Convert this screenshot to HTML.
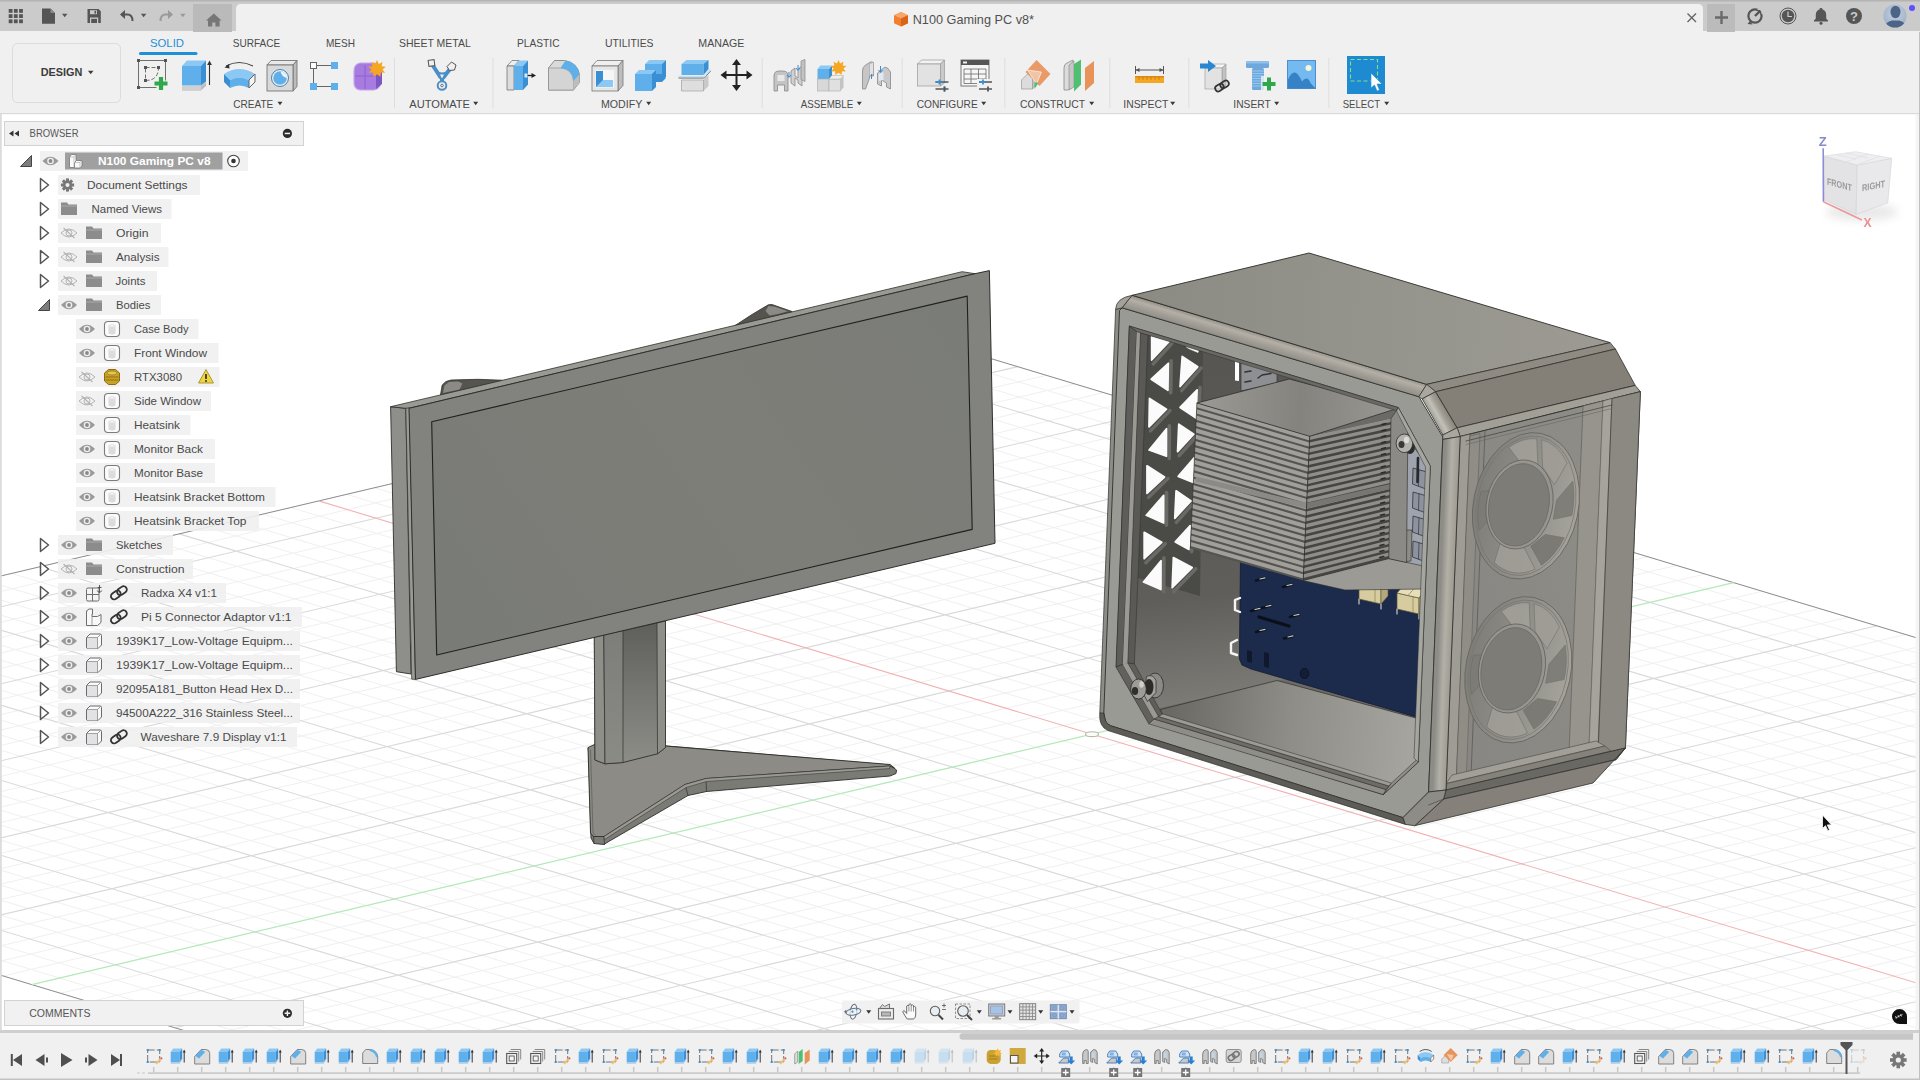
<!DOCTYPE html>
<html><head><meta charset="utf-8"><title>N100 Gaming PC v8</title>
<style>
html,body{margin:0;padding:0;background:#fff;overflow:hidden}
body{width:1920px;height:1080px;position:relative;font-family:"Liberation Sans",sans-serif}
svg{position:absolute;left:0;top:0;display:block}
text{font-family:"Liberation Sans",sans-serif}
</style></head><body>
<svg width="1920" height="1080" viewBox="0 0 1920 1080">
<rect width="1920" height="1080" fill="#ffffff"/>
<g id="grid">
<path d="M-741.5 751.3L960.4 349.4M-712.8 760L989.1 358M-655.6 777.3L1046.3 375.3M-626.9 785.9L1075 383.9M-598.3 794.5L1103.6 392.6M-569.6 803.2L1132.3 401.2M-512.4 820.5L1189.5 418.5M-483.7 829.1L1218.2 427.1M-455.1 837.7L1246.8 435.8M-426.4 846.4L1275.5 444.4M-369.2 863.7L1332.7 461.7M-340.5 872.3L1361.4 470.3M-311.9 880.9L1390 478.9M-283.2 889.6L1418.7 487.6M-226 906.9L1475.9 504.9M-197.3 915.5L1504.6 513.5M-168.7 924.1L1533.2 522.2M-140 932.8L1561.9 530.8M-82.8 950.1L1619.1 548.1M-54.1 958.7L1647.8 556.7M-25.5 967.3L1676.4 565.4M3.2 976L1705.1 574M60.4 993.3L1762.3 591.3M89.1 1001.9L1791 599.9M117.7 1010.5L1819.6 608.5M146.4 1019.2L1848.3 617.2M203.6 1036.5L1905.5 634.5M232.3 1045.1L1934.2 643.1M260.9 1053.7L1962.8 651.8M289.6 1062.4L1991.5 660.4M346.8 1079.7L2048.7 677.7M375.5 1088.3L2077.4 686.3M404.1 1096.9L2106 695M432.8 1105.6L2134.7 703.6M490 1122.9L2191.9 720.9M518.7 1131.5L2220.6 729.5M547.3 1140.1L2249.2 738.2M576 1148.8L2277.9 746.8M633.2 1166.1L2335.1 764.1M661.9 1174.7L2363.8 772.7M690.5 1183.3L2392.4 781.4M719.2 1192L2421.1 790M776.4 1209.3L2478.3 807.3M805.1 1217.9L2507 815.9M833.7 1226.5L2535.6 824.5M862.4 1235.2L2564.3 833.2M919.6 1252.5L2621.5 850.5M948.3 1261.1L2650.2 859.1M976.9 1269.7L2678.8 867.8M1005.6 1278.4L2707.5 876.4M-741.5 751.3L1005.6 1278.4M-713.6 744.8L1033.5 1271.8M-685.7 738.2L1061.4 1265.2M-629.9 725L1117.2 1252M-602 718.4L1145.1 1245.4M-574.1 711.8L1173 1238.8M-546.2 705.2L1200.9 1232.2M-490.4 692L1256.7 1219.1M-462.5 685.4L1284.6 1212.5M-434.6 678.9L1312.5 1205.9M-406.7 672.3L1340.4 1199.3M-350.9 659.1L1396.2 1186.1M-323 652.5L1424.1 1179.5M-295.1 645.9L1452 1172.9M-267.2 639.3L1479.9 1166.4M-211.4 626.1L1535.7 1153.2M-183.5 619.5L1563.6 1146.6M-155.6 613L1591.5 1140M-127.7 606.4L1619.4 1133.4M-71.9 593.2L1675.2 1120.2M-44 586.6L1703.1 1113.6M-16.1 580L1731 1107M11.8 573.4L1758.9 1100.5M67.6 560.2L1814.7 1087.3M95.5 553.6L1842.6 1080.7M123.4 547.1L1870.5 1074.1M151.3 540.5L1898.4 1067.5M207.1 527.3L1954.2 1054.3M235 520.7L1982.1 1047.7M262.9 514.1L2010 1041.1M290.8 507.5L2037.9 1034.5M346.6 494.3L2093.7 1021.4M374.5 487.7L2121.6 1014.8M402.4 481.2L2149.5 1008.2M430.3 474.6L2177.4 1001.6M486.1 461.4L2233.2 988.4M514 454.8L2261.1 981.8M541.9 448.2L2289 975.2M569.8 441.6L2316.9 968.6M625.6 428.4L2372.7 955.5M653.5 421.8L2400.6 948.9M681.4 415.2L2428.5 942.3M709.3 408.7L2456.4 935.7M765.1 395.5L2512.2 922.5M793 388.9L2540.1 915.9M820.9 382.3L2568 909.3M848.8 375.7L2595.9 902.8M904.6 362.5L2651.7 889.6M932.5 355.9L2679.6 883M960.4 349.4L2707.5 876.4" stroke="#f0f0f1" stroke-width="1" fill="none"/>
<path d="M-684.2 768.6L1017.7 366.6M-541 811.8L1160.9 409.8M-397.8 855L1304.1 453M-254.6 898.2L1447.3 496.2M-111.4 941.4L1590.5 539.4M175 1027.8L1876.9 625.8M318.2 1071L2020.1 669M461.4 1114.2L2163.3 712.2M604.6 1157.4L2306.5 755.4M747.8 1200.6L2449.7 798.6M891 1243.8L2592.9 841.8M-657.8 731.6L1089.3 1258.6M-518.3 698.6L1228.8 1225.7M-378.8 665.7L1368.3 1192.7M-239.3 632.7L1507.8 1159.8M-99.8 599.8L1647.3 1126.8M39.7 566.8L1786.8 1093.9M179.2 533.9L1926.3 1060.9M458.2 468L2205.3 995M597.7 435L2344.8 962.1M737.2 402.1L2484.3 929.1M876.7 369.1L2623.8 896.2" stroke="#d9d9dc" stroke-width="1.1" fill="none"/>
<path d="M-741.5 751.3 L960.4 349.4 L2707.5 876.4 L1005.6 1278.4 Z" stroke="#8e8e8e" stroke-width="1" fill="none"/>
<path d="M318.7 500.9L2065.8 1028" stroke="#f2b2b2" stroke-width="1.1" fill="none"/>
<path d="M31.8 984.6L1733.7 582.6" stroke="#b2e9b7" stroke-width="1.3" fill="none"/>
<ellipse cx="1092" cy="734.2" rx="6.5" ry="2.4" fill="#fbfbf8" stroke="#b9b9aa" stroke-width="1.1"/>
</g>
<g id="models">
<defs>
<linearGradient id="gScreen" gradientUnits="userSpaceOnUse" x1="436" y1="655" x2="968" y2="296"><stop offset="0" stop-color="#797b76"/><stop offset=".55" stop-color="#7e7e78"/><stop offset="1" stop-color="#7a7c77"/></linearGradient>
<linearGradient id="gNeck" gradientUnits="userSpaceOnUse" x1="0" y1="625" x2="0" y2="760"><stop offset="0" stop-color="#5f5f5b"/><stop offset=".45" stop-color="#747470"/><stop offset="1" stop-color="#8c8c87"/></linearGradient>
<linearGradient id="gNeck2" gradientUnits="userSpaceOnUse" x1="0" y1="630" x2="0" y2="762"><stop offset="0" stop-color="#7d7d79"/><stop offset="1" stop-color="#8b8b86"/></linearGradient>
<linearGradient id="gTop" gradientUnits="userSpaceOnUse" x1="1130" y1="300" x2="1610" y2="340"><stop offset="0" stop-color="#8b8a83"/><stop offset=".5" stop-color="#94938c"/><stop offset="1" stop-color="#9c9a93"/></linearGradient>
<linearGradient id="gFillet" gradientUnits="userSpaceOnUse" x1="0" y1="0" x2="-4.5" y2="15" gradientTransform="translate(1132 295)"><stop offset="0" stop-color="#8f8b82"/><stop offset=".3" stop-color="#b4b0a7"/><stop offset=".6" stop-color="#a39f96"/><stop offset="1" stop-color="#8d8c86"/></linearGradient>
<linearGradient id="gPillar" gradientUnits="userSpaceOnUse" x1="1440" y1="600" x2="1458" y2="600.7"><stop offset="0" stop-color="#8d8c86"/><stop offset=".35" stop-color="#b3b0a8"/><stop offset=".7" stop-color="#a09d95"/><stop offset="1" stop-color="#8a877f"/></linearGradient>
<linearGradient id="gFloor" gradientUnits="userSpaceOnUse" x1="1170" y1="715" x2="1410" y2="740"><stop offset="0" stop-color="#6a6964"/><stop offset=".5" stop-color="#8e8d87"/><stop offset="1" stop-color="#a5a49e"/></linearGradient>
<linearGradient id="gWallL" gradientUnits="userSpaceOnUse" x1="1170" y1="340" x2="1215" y2="705"><stop offset="0" stop-color="#565551"/><stop offset=".7" stop-color="#5f5e5a"/><stop offset="1" stop-color="#7d7c77"/></linearGradient>
<linearGradient id="gHsTop" gradientUnits="userSpaceOnUse" x1="1200" y1="400" x2="1400" y2="415"><stop offset="0" stop-color="#9a9994"/><stop offset=".5" stop-color="#84837e"/><stop offset="1" stop-color="#999893"/></linearGradient>
<linearGradient id="gSide" gradientUnits="userSpaceOnUse" x1="1450" y1="600" x2="1635" y2="560"><stop offset="0" stop-color="#898783"/><stop offset="1" stop-color="#8f8d87"/></linearGradient>
<linearGradient id="gChf" gradientUnits="userSpaceOnUse" x1="1428" y1="415" x2="1444" y2="406"><stop offset="0" stop-color="#8f8d86"/><stop offset=".45" stop-color="#c4c1b8"/><stop offset=".7" stop-color="#a29f97"/><stop offset="1" stop-color="#8a867e"/></linearGradient>
<linearGradient id="gRing" x1="0" y1="0" x2="1" y2="0"><stop offset="0" stop-color="#7f7d77"/><stop offset=".5" stop-color="#908e88"/><stop offset="1" stop-color="#a5a39c"/></linearGradient>
<radialGradient id="gFan" cx="50%" cy="50%" r="50%"><stop offset="0" stop-color="#85837d"/><stop offset=".8" stop-color="#8e8c85"/><stop offset="1" stop-color="#a19f98"/></radialGradient>
</defs>
<path d="M588 748 L588.5 752 L591 838 L594 843.5 L604 844.5 L607 842.5 L688 795.5 L706.5 791.5 L890 776 L896 773.5 L896.5 770 L890 765 L667 746 L640 744Z" fill="#7b7b76" stroke="#2e2e2b" stroke-width="0.9" stroke-linejoin="round" />
<path d="M588 747.5 L590.5 833 L593.5 836.5 L604 836.5 L685 784.5 L706 778.5 L889.5 766 L894.5 768 L890 764.5 L667.5 746.2 L640 742 L600 742Z" fill="#8c8b85" stroke="#2e2e2b" stroke-width="0.9" stroke-linejoin="round" />
<path d="M593.5 836.5 L594 843.5" fill="none" stroke="#2e2e2b" stroke-width="0.7" stroke-linecap="round" stroke-linejoin="round" />
<path d="M604 836.5 L604.5 844.5" fill="none" stroke="#2e2e2b" stroke-width="0.7" stroke-linecap="round" stroke-linejoin="round" />
<path d="M685 784.5 L688 795.5" fill="none" stroke="#2e2e2b" stroke-width="0.7" stroke-linecap="round" stroke-linejoin="round" />
<path d="M706 778.5 L706.5 791.5" fill="none" stroke="#2e2e2b" stroke-width="0.7" stroke-linecap="round" stroke-linejoin="round" />
<path d="M590.5 750 L593 833 L595.5 835" fill="none" stroke="#55544f" stroke-width="0.6" stroke-linecap="round" stroke-linejoin="round" />
<path d="M604 836.5 L685 784.5 L706 778.5 L889.5 766 L890 768.5 L706.3 781.5 L686 787.5 L604.5 839.5Z" fill="#9b9a94" stroke="#2e2e2b" stroke-width="0.5" stroke-linejoin="round" />
<path d="M594.3 637 L665.5 621 L665.5 747.5 L657.5 753.8 L623 762.5 L605 763.8 L595 760Z" fill="url(#gNeck)" stroke="#2e2e2b" stroke-width="0.9" stroke-linejoin="round" />
<path d="M594.3 637 L603.8 635 L605 763.8 L595 760Z" fill="#8f8f8a" stroke="#2e2e2b" stroke-width="0.7" stroke-linejoin="round" />
<path d="M603.8 635 L623 630.5 L623 762.5 L605 763.8Z" fill="url(#gNeck2)" stroke="#2e2e2b" stroke-width="0.7" stroke-linejoin="round" />
<path d="M657 623 L665.5 621 L665.5 747.5 L657.5 753.8Z" fill="#8f8f8a" stroke="#2e2e2b" stroke-width="0.7" stroke-linejoin="round" />
<path d="M440.3 396 L442.2 385 L446 381.5 L451.1 380 L478 379.3 L502 380.2 L502 383Z" fill="#55544f" stroke="#2e2e2b" stroke-width="0.8" stroke-linejoin="round" />
<path d="M443 393 L444.5 385.5 L449 382 L458 381.5 L462.5 383.5 L459.5 389.5Z" fill="#8c8a84" />
<path d="M732 327.5 L752 314.5 L768.3 304.8 L772 304.5 L792 311.5 L792 314.5Z" fill="#55544f" stroke="#2e2e2b" stroke-width="0.8" stroke-linejoin="round" />
<path d="M768.5 306 L775 306.8 L788 311.3 L778 314 L769.5 315.5 L765.5 311Z" fill="#8c8a84" />
<path d="M390.6 406.7 L405.8 408.3 L411 674 L396.4 671.7Z" fill="#8e8f8a" stroke="#2e2e2b" stroke-width="0.9" stroke-linejoin="round" />
<path d="M390.6 406.7 L962.2 271.7 L975 273.7 L408 408.5 L405.8 408.3Z" fill="#9a9a95" stroke="#2e2e2b" stroke-width="0.8" stroke-linejoin="round" />
<path d="M405.8 408.3 L409.4 407.8 L415.5 679.4 L411.7 679.1Z" fill="#9b9b96" stroke="#2e2e2b" stroke-width="0.7" stroke-linejoin="round" />
<path d="M409 408.3 L975 273.7 L989.4 270.6 L995 543.3 L415.5 679.4Z" fill="#82837e" stroke="#2e2e2b" stroke-width="1" stroke-linejoin="round" />
<path d="M431.7 421.7 L967.2 296.1 L972.2 529.4 L436.7 655Z" fill="url(#gScreen)" stroke="#20201e" stroke-width="1.1" stroke-linejoin="round" />
<path d="M1129.4 326.1 L1398.3 407.6 L1430.3 466 L1418.2 762.2 L1383.3 794.6 L1150 723.3 L1116.3 666.3Z" fill="#6b6a66" />
<path d="M1141 330 L1290 374 L1290 678 L1160 708 L1150 723.3 L1116.3 666.3 L1129.4 330Z" fill="url(#gWallL)" />
<path d="M1160.3 709.5 L1277 680.5 L1419.5 719 L1418.2 762.2 L1391 784.5 L1163 715.5Z" fill="url(#gFloor)" stroke="#2e2e2b" stroke-width="0.7" stroke-linejoin="round" />
<path d="M1241 362 L1277 372.5 L1277 383 L1241 391Z" fill="#8d8f93" stroke="#2e2e2b" stroke-width="0.6" stroke-linejoin="round" />
<path d="M1245 372 L1251 371" fill="none" stroke="#333" stroke-width="1.6" stroke-linecap="round" stroke-linejoin="round" />
<path d="M1245 382 L1251 381" fill="none" stroke="#333" stroke-width="1.6" stroke-linecap="round" stroke-linejoin="round" />
<path d="M1258 378 L1262 375 L1271 373.5" fill="none" stroke="#333" stroke-width="1.4" stroke-linecap="round" stroke-linejoin="round" />
<path d="M1235 361 L1239 362 L1239 381 L1235 380.5Z" fill="#ffffff" />
<path d="M1240.7 540 L1420 560 L1419.5 718 L1251 669 L1242 665 L1239.4 659Z" fill="#1c2a4b" stroke="#141c30" stroke-width="0.8" stroke-linejoin="round" />
<path d="M1240 598 L1235 600 L1235 610 L1240 612" fill="none" stroke="#f4f4f4" stroke-width="2.4" stroke-linecap="round" stroke-linejoin="round" />
<path d="M1237 640 L1231 643 L1231 653 L1237 655" fill="none" stroke="#f4f4f4" stroke-width="2.4" stroke-linecap="round" stroke-linejoin="round" />
<path d="M1256 580.5 L1265 578" fill="none" stroke="#0d1220" stroke-width="2.6" stroke-linecap="round" stroke-linejoin="round" />
<path d="M1260 579 L1265 577.8" fill="none" stroke="#c9c6b8" stroke-width="1.2" stroke-linecap="round" stroke-linejoin="round" />
<path d="M1283 587 L1292 584.5" fill="none" stroke="#0d1220" stroke-width="2.6" stroke-linecap="round" stroke-linejoin="round" />
<path d="M1287 585.5 L1292 584.3" fill="none" stroke="#c9c6b8" stroke-width="1.2" stroke-linecap="round" stroke-linejoin="round" />
<path d="M1251 611 L1260 608.5" fill="none" stroke="#0d1220" stroke-width="2.6" stroke-linecap="round" stroke-linejoin="round" />
<path d="M1255 609.5 L1260 608.3" fill="none" stroke="#c9c6b8" stroke-width="1.2" stroke-linecap="round" stroke-linejoin="round" />
<path d="M1262 608 L1271 605.5" fill="none" stroke="#0d1220" stroke-width="2.6" stroke-linecap="round" stroke-linejoin="round" />
<path d="M1266 606.5 L1271 605.3" fill="none" stroke="#c9c6b8" stroke-width="1.2" stroke-linecap="round" stroke-linejoin="round" />
<path d="M1290 617 L1299 614.5" fill="none" stroke="#0d1220" stroke-width="2.6" stroke-linecap="round" stroke-linejoin="round" />
<path d="M1294 615.5 L1299 614.3" fill="none" stroke="#c9c6b8" stroke-width="1.2" stroke-linecap="round" stroke-linejoin="round" />
<path d="M1256 632 L1265 629.5" fill="none" stroke="#0d1220" stroke-width="2.6" stroke-linecap="round" stroke-linejoin="round" />
<path d="M1260 630.5 L1265 629.3" fill="none" stroke="#c9c6b8" stroke-width="1.2" stroke-linecap="round" stroke-linejoin="round" />
<path d="M1284 638.5 L1293 636" fill="none" stroke="#0d1220" stroke-width="2.6" stroke-linecap="round" stroke-linejoin="round" />
<path d="M1288 637 L1293 635.8" fill="none" stroke="#c9c6b8" stroke-width="1.2" stroke-linecap="round" stroke-linejoin="round" />
<path d="M1259 617 L1289 626" fill="none" stroke="#0b0f1a" stroke-width="3.2" stroke-linecap="round" stroke-linejoin="round" />
<path d="M1247 650 L1252 651.5 L1252 663 L1247 661.5Z" fill="#10182c" />
<path d="M1264 652 L1269 653.5 L1269 668 L1264 666.5Z" fill="#10182c" />
<ellipse cx="1304.5" cy="673.5" rx="4.2" ry="5" fill="#141d36" stroke="#0b0f1a" stroke-width=".8"/>
<path d="M1359 583 L1381 588 L1381 604 L1359 599Z" fill="#d6cc9f" stroke="#5f5838" stroke-width="0.7" stroke-linejoin="round" />
<path d="M1359 583 L1366 575 L1388 580 L1381 588Z" fill="#e6deb8" stroke="#5f5838" stroke-width="0.6" stroke-linejoin="round" />
<path d="M1381 588 L1388 580 L1388 596 L1381 604Z" fill="#b3a97e" stroke="#5f5838" stroke-width="0.6" stroke-linejoin="round" />
<path d="M1370 585.5 L1377 577.5" fill="none" stroke="#8a8258" stroke-width="0.7" stroke-linecap="round" stroke-linejoin="round" />
<path d="M1375 586.7 L1375 602.5" fill="none" stroke="#8a8258" stroke-width="0.7" stroke-linecap="round" stroke-linejoin="round" />
<path d="M1359 599 L1359 604" fill="none" stroke="#cfcab5" stroke-width="1.2" stroke-linecap="round" stroke-linejoin="round" />
<path d="M1381 604 L1381 609" fill="none" stroke="#cfcab5" stroke-width="1.2" stroke-linecap="round" stroke-linejoin="round" />
<path d="M1397 593 L1419 598 L1419 614 L1397 609Z" fill="#d6cc9f" stroke="#5f5838" stroke-width="0.7" stroke-linejoin="round" />
<path d="M1397 593 L1404 585 L1426 590 L1419 598Z" fill="#e6deb8" stroke="#5f5838" stroke-width="0.6" stroke-linejoin="round" />
<path d="M1419 598 L1426 590 L1426 606 L1419 614Z" fill="#b3a97e" stroke="#5f5838" stroke-width="0.6" stroke-linejoin="round" />
<path d="M1408 595.5 L1415 587.5" fill="none" stroke="#8a8258" stroke-width="0.7" stroke-linecap="round" stroke-linejoin="round" />
<path d="M1413 596.7 L1413 612.5" fill="none" stroke="#8a8258" stroke-width="0.7" stroke-linecap="round" stroke-linejoin="round" />
<path d="M1397 609 L1397 614" fill="none" stroke="#cfcab5" stroke-width="1.2" stroke-linecap="round" stroke-linejoin="round" />
<path d="M1419 614 L1419 619" fill="none" stroke="#cfcab5" stroke-width="1.2" stroke-linecap="round" stroke-linejoin="round" />
<path d="M1407 438 L1431 470 L1425.5 572 L1406 566Z" fill="#9ea3ad" stroke="#3f434b" stroke-width="0.7" stroke-linejoin="round" />
<path d="M1413 468 L1427 472 L1426 489 L1412.5 484Z" fill="#8d939e" stroke="#30343b" stroke-width="0.8" stroke-linejoin="round" />
<path d="M1419 470 L1418.5 486" fill="none" stroke="#30343b" stroke-width="0.7" stroke-linecap="round" stroke-linejoin="round" />
<path d="M1413 492 L1427 496 L1426 513 L1412.5 508Z" fill="#8d939e" stroke="#30343b" stroke-width="0.8" stroke-linejoin="round" />
<path d="M1419 494 L1418.5 510" fill="none" stroke="#30343b" stroke-width="0.7" stroke-linecap="round" stroke-linejoin="round" />
<path d="M1413 516 L1427 520 L1426 537 L1412.5 532Z" fill="#8d939e" stroke="#30343b" stroke-width="0.8" stroke-linejoin="round" />
<path d="M1419 518 L1418.5 534" fill="none" stroke="#30343b" stroke-width="0.7" stroke-linecap="round" stroke-linejoin="round" />
<path d="M1413 541 L1427 545 L1426 562 L1412.5 557Z" fill="#8d939e" stroke="#30343b" stroke-width="0.8" stroke-linejoin="round" />
<path d="M1419 543 L1418.5 559" fill="none" stroke="#30343b" stroke-width="0.7" stroke-linecap="round" stroke-linejoin="round" />
<path d="M1418 458 L1417.5 482" fill="none" stroke="#26282c" stroke-width="2.6" stroke-linecap="round" stroke-linejoin="round" />
<path d="M1398 523 L1404 521.5 L1404 530 L1412 530 L1411 561 L1397 562.5Z" fill="#8d8c87" stroke="#2e2e2b" stroke-width="0.6" stroke-linejoin="round" />
<path d="M1303 580.6 L1389 558.6 L1428 567 L1426.5 589 L1345 590Z" fill="#9b9a95" stroke="#2e2e2b" stroke-width="0.6" stroke-linejoin="round" />
<path d="M1147.5 334.5 L1203 351 L1200 596 L1138 578Z" fill="#4a4a47" />
<path d="M1172.2 343.1 L1153.3 363.9" fill="none" stroke="#6a6965" stroke-width="3.4" stroke-linecap="round" stroke-linejoin="round" />
<path d="M1170 410.6 L1150.5 430.9" fill="none" stroke="#6a6965" stroke-width="3.4" stroke-linecap="round" stroke-linejoin="round" />
<path d="M1168 478.5 L1148.6 497.4" fill="none" stroke="#6a6965" stroke-width="3.4" stroke-linecap="round" stroke-linejoin="round" />
<path d="M1165.3 543.8 L1145.8 562.7" fill="none" stroke="#6a6965" stroke-width="3.4" stroke-linecap="round" stroke-linejoin="round" />
<path d="M1201.1 368.1 L1181.6 390.7" fill="none" stroke="#6a6965" stroke-width="3.4" stroke-linecap="round" stroke-linejoin="round" />
<path d="M1197.2 435.5 L1179.2 455.7" fill="none" stroke="#6a6965" stroke-width="3.4" stroke-linecap="round" stroke-linejoin="round" />
<path d="M1194.4 502.2 L1176.4 522.4" fill="none" stroke="#6a6965" stroke-width="3.4" stroke-linecap="round" stroke-linejoin="round" />
<path d="M1195.8 568.8 L1173.6 591.8" fill="none" stroke="#6a6965" stroke-width="3.4" stroke-linecap="round" stroke-linejoin="round" />
<path d="M1171.1 360.7 L1170.7 392.7" fill="none" stroke="#6a6965" stroke-width="3.6" stroke-linecap="round" stroke-linejoin="round" />
<path d="M1169.4 425.9 L1169.2 458.5" fill="none" stroke="#6a6965" stroke-width="3.6" stroke-linecap="round" stroke-linejoin="round" />
<path d="M1166.6 492.6 L1166.4 525.2" fill="none" stroke="#6a6965" stroke-width="3.6" stroke-linecap="round" stroke-linejoin="round" />
<path d="M1163.9 557.9 L1163.7 591.8" fill="none" stroke="#6a6965" stroke-width="3.6" stroke-linecap="round" stroke-linejoin="round" />
<path d="M1200 387.3 L1198.7 420.4" fill="none" stroke="#6a6965" stroke-width="3.6" stroke-linecap="round" stroke-linejoin="round" />
<path d="M1197.2 455.1 L1196.7 484.9" fill="none" stroke="#6a6965" stroke-width="3.6" stroke-linecap="round" stroke-linejoin="round" />
<path d="M1193 523.2 L1191.6 551.6" fill="none" stroke="#6a6965" stroke-width="3.6" stroke-linecap="round" stroke-linejoin="round" />
<path d="M1151.7 337 L1168.7 342 L1151.7 360Z" fill="#fbfbfb" stroke="#fbfbfb" stroke-width="1.8" stroke-linejoin="round" />
<path d="M1149.5 398.4 L1166.5 409.2 L1149 426.8Z" fill="#fbfbfb" stroke="#fbfbfb" stroke-width="1.8" stroke-linejoin="round" />
<path d="M1147 465.8 L1164.5 477.1 L1147 493.4Z" fill="#fbfbfb" stroke="#fbfbfb" stroke-width="1.8" stroke-linejoin="round" />
<path d="M1144.2 532.4 L1161.8 542.4 L1144.2 558.7Z" fill="#fbfbfb" stroke="#fbfbfb" stroke-width="1.8" stroke-linejoin="round" />
<path d="M1182.2 356.5 L1197.7 366.8 L1180.1 386.5Z" fill="#fbfbfb" stroke="#fbfbfb" stroke-width="1.8" stroke-linejoin="round" />
<path d="M1178.8 424.2 L1193.8 434.2 L1177.6 451.6Z" fill="#fbfbfb" stroke="#fbfbfb" stroke-width="1.8" stroke-linejoin="round" />
<path d="M1176.1 490.8 L1191 500.9 L1174.8 518.3Z" fill="#fbfbfb" stroke="#fbfbfb" stroke-width="1.8" stroke-linejoin="round" />
<path d="M1173.4 557.6 L1192.2 567.6 L1172.2 587.5Z" fill="#fbfbfb" stroke="#fbfbfb" stroke-width="1.8" stroke-linejoin="round" />
<path d="M1168.3 363.3 L1167.9 390.3 L1151.2 379.2Z" fill="#fbfbfb" stroke="#fbfbfb" stroke-width="1.8" stroke-linejoin="round" />
<path d="M1166.5 428.7 L1166.4 456.2 L1149.1 450Z" fill="#fbfbfb" stroke="#fbfbfb" stroke-width="1.8" stroke-linejoin="round" />
<path d="M1163.7 495.4 L1163.6 522.9 L1146.3 515.3Z" fill="#fbfbfb" stroke="#fbfbfb" stroke-width="1.8" stroke-linejoin="round" />
<path d="M1161 560.8 L1160.9 589.5 L1143.5 582Z" fill="#fbfbfb" stroke="#fbfbfb" stroke-width="1.8" stroke-linejoin="round" />
<path d="M1197.1 390 L1196 418 L1180.1 407.5Z" fill="#fbfbfb" stroke="#fbfbfb" stroke-width="1.8" stroke-linejoin="round" />
<path d="M1194.4 457.7 L1193.9 482.7 L1178.2 476.4Z" fill="#fbfbfb" stroke="#fbfbfb" stroke-width="1.8" stroke-linejoin="round" />
<path d="M1190.2 525.7 L1188.9 549.4 L1175.3 541.9Z" fill="#fbfbfb" stroke="#fbfbfb" stroke-width="1.8" stroke-linejoin="round" />
<path d="M1186 346.6 L1198.5 350.4 L1198 352.5 L1188.5 348.5Z" fill="#fbfbfb" stroke="#fbfbfb" stroke-width="0.6" stroke-linejoin="round" />
<path d="M1196.9 403 L1309.7 436.3 L1303.2 580.6 L1190.4 548.2Z" fill="#55544f" />
<path d="M1196.9 403 L1309.7 436.3 L1309.5 440.4 L1196.7 407.2Z" fill="#a09f9b" />
<path d="M1196.6 409.3 L1309.4 442.6 L1309.2 446.7 L1196.4 413.5Z" fill="#a09f9b" />
<path d="M1196.3 415.6 L1309.1 448.8 L1308.9 453 L1196.1 419.8Z" fill="#a09f9b" />
<path d="M1196.1 421.9 L1308.9 455.1 L1308.7 459.3 L1195.9 426.1Z" fill="#a09f9b" />
<path d="M1195.8 428.3 L1308.6 461.4 L1308.4 465.5 L1195.6 432.4Z" fill="#a09f9b" />
<path d="M1195.5 434.6 L1308.3 467.7 L1308.1 471.8 L1195.3 438.7Z" fill="#a09f9b" />
<path d="M1195.2 440.9 L1308 473.9 L1307.8 478.1 L1195 445Z" fill="#a09f9b" />
<path d="M1194.9 447.2 L1307.7 480.2 L1307.5 484.4 L1194.7 451.4Z" fill="#a09f9b" />
<path d="M1194.6 453.5 L1307.4 486.5 L1307.3 490.6 L1194.5 457.7Z" fill="#a09f9b" />
<path d="M1194.4 459.8 L1307.2 492.8 L1307 496.9 L1194.2 464Z" fill="#a09f9b" />
<path d="M1194.1 466.1 L1306.9 499 L1306.7 503.2 L1193.9 470.3Z" fill="#a09f9b" />
<path d="M1193.8 472.4 L1306.6 505.3 L1306.4 509.5 L1193.6 476.6Z" fill="#a09f9b" />
<path d="M1193.5 478.8 L1306.3 511.6 L1306.1 515.7 L1193.3 482.9Z" fill="#a09f9b" />
<path d="M1193.2 485.1 L1306 517.9 L1305.8 522 L1193 489.2Z" fill="#a09f9b" />
<path d="M1192.9 491.4 L1305.7 524.1 L1305.6 528.3 L1192.8 495.5Z" fill="#a09f9b" />
<path d="M1192.7 497.7 L1305.5 530.4 L1305.3 534.5 L1192.5 501.9Z" fill="#a09f9b" />
<path d="M1192.4 504 L1305.2 536.7 L1305 540.8 L1192.2 508.2Z" fill="#a09f9b" />
<path d="M1192.1 510.3 L1304.9 543 L1304.7 547.1 L1191.9 514.5Z" fill="#a09f9b" />
<path d="M1191.8 516.6 L1304.6 549.2 L1304.4 553.4 L1191.6 520.8Z" fill="#a09f9b" />
<path d="M1191.5 522.9 L1304.3 555.5 L1304.1 559.6 L1191.3 527.1Z" fill="#a09f9b" />
<path d="M1191.2 529.3 L1304 561.8 L1303.9 565.9 L1191.1 533.4Z" fill="#a09f9b" />
<path d="M1191 535.6 L1303.8 568.1 L1303.6 572.2 L1190.8 539.7Z" fill="#a09f9b" />
<path d="M1190.7 541.9 L1303.5 574.3 L1303.3 578.5 L1190.5 546.1Z" fill="#a09f9b" />
<path d="M1309.7 436.3 L1391 418.5 L1388.8 558.6 L1303.2 580.6Z" fill="#454542" />
<path d="M1309.7 436.3 L1391 418.5 L1390.9 422 L1309.5 439.9Z" fill="#8f8e8a" />
<path d="M1309.4 442.6 L1390.9 424.6 L1390.8 428.1 L1309.3 446.2Z" fill="#8f8e8a" />
<path d="M1309.1 448.8 L1390.8 430.7 L1390.8 434.2 L1309 452.5Z" fill="#8f8e8a" />
<path d="M1308.9 455.1 L1390.7 436.8 L1390.7 440.3 L1308.7 458.8Z" fill="#8f8e8a" />
<path d="M1308.6 461.4 L1390.6 442.9 L1390.6 446.4 L1308.4 465Z" fill="#8f8e8a" />
<path d="M1308.3 467.7 L1390.5 449 L1390.5 452.5 L1308.1 471.3Z" fill="#8f8e8a" />
<path d="M1308 473.9 L1390.4 455 L1390.4 458.6 L1307.8 477.6Z" fill="#8f8e8a" />
<path d="M1307.7 480.2 L1390.3 461.1 L1390.3 464.7 L1307.6 483.9Z" fill="#8f8e8a" />
<path d="M1307.4 486.5 L1390.2 467.2 L1390.2 470.8 L1307.3 490.1Z" fill="#8f8e8a" />
<path d="M1307.2 492.8 L1390.1 473.3 L1390.1 476.9 L1307 496.4Z" fill="#8f8e8a" />
<path d="M1306.9 499 L1390 479.4 L1390 482.9 L1306.7 502.7Z" fill="#8f8e8a" />
<path d="M1306.6 505.3 L1389.9 485.5 L1389.9 489 L1306.4 509Z" fill="#8f8e8a" />
<path d="M1306.3 511.6 L1389.9 491.6 L1389.8 495.1 L1306.1 515.2Z" fill="#8f8e8a" />
<path d="M1306 517.9 L1389.8 497.7 L1389.7 501.2 L1305.9 521.5Z" fill="#8f8e8a" />
<path d="M1305.7 524.1 L1389.7 503.8 L1389.6 507.3 L1305.6 527.8Z" fill="#8f8e8a" />
<path d="M1305.5 530.4 L1389.6 509.9 L1389.5 513.4 L1305.3 534Z" fill="#8f8e8a" />
<path d="M1305.2 536.7 L1389.5 516 L1389.4 519.5 L1305 540.3Z" fill="#8f8e8a" />
<path d="M1304.9 543 L1389.4 522.1 L1389.3 525.6 L1304.7 546.6Z" fill="#8f8e8a" />
<path d="M1304.6 549.2 L1389.3 528.1 L1389.2 531.7 L1304.4 552.9Z" fill="#8f8e8a" />
<path d="M1304.3 555.5 L1389.2 534.2 L1389.1 537.8 L1304.2 559.1Z" fill="#8f8e8a" />
<path d="M1304 561.8 L1389.1 540.3 L1389 543.9 L1303.9 565.4Z" fill="#8f8e8a" />
<path d="M1303.8 568.1 L1389 546.4 L1388.9 550 L1303.6 571.7Z" fill="#8f8e8a" />
<path d="M1303.5 574.3 L1388.9 552.5 L1388.8 556 L1303.3 578Z" fill="#8f8e8a" />
<path d="M1195.8 476.5 L1307 503 L1306.7 508.5 L1195.5 481.5Z" fill="#8b8a86" />
<path d="M1307 503 L1390 484 L1390 489 L1306.7 508.5Z" fill="#777672" />
<path d="M1391 418.5 L1398.2 408.2 L1408 420.5 L1406.5 562.5 L1388.8 558.6Z" fill="#8b8a86" stroke="#2e2e2b" stroke-width="0.6" stroke-linejoin="round" />
<path d="M1382 424.6 L1386 423.6" fill="none" stroke="#2c2c2a" stroke-width="1.5" stroke-linecap="round" stroke-linejoin="round" />
<path d="M1381.9 430.7 L1385.9 429.7" fill="none" stroke="#2c2c2a" stroke-width="1.5" stroke-linecap="round" stroke-linejoin="round" />
<path d="M1381.8 436.7 L1385.8 435.7" fill="none" stroke="#2c2c2a" stroke-width="1.5" stroke-linecap="round" stroke-linejoin="round" />
<path d="M1381.7 442.7 L1385.7 441.7" fill="none" stroke="#2c2c2a" stroke-width="1.5" stroke-linecap="round" stroke-linejoin="round" />
<path d="M1381.6 448.8 L1385.6 447.8" fill="none" stroke="#2c2c2a" stroke-width="1.5" stroke-linecap="round" stroke-linejoin="round" />
<path d="M1381.5 454.8 L1385.5 453.8" fill="none" stroke="#2c2c2a" stroke-width="1.5" stroke-linecap="round" stroke-linejoin="round" />
<path d="M1381.4 460.9 L1385.4 459.9" fill="none" stroke="#2c2c2a" stroke-width="1.5" stroke-linecap="round" stroke-linejoin="round" />
<path d="M1381.3 466.9 L1385.3 465.9" fill="none" stroke="#2c2c2a" stroke-width="1.5" stroke-linecap="round" stroke-linejoin="round" />
<path d="M1381.2 473 L1385.2 472" fill="none" stroke="#2c2c2a" stroke-width="1.5" stroke-linecap="round" stroke-linejoin="round" />
<path d="M1381.1 479 L1385.1 478" fill="none" stroke="#2c2c2a" stroke-width="1.5" stroke-linecap="round" stroke-linejoin="round" />
<path d="M1380.8 497.1 L1384.8 496.1" fill="none" stroke="#2c2c2a" stroke-width="1.5" stroke-linecap="round" stroke-linejoin="round" />
<path d="M1380.7 503.2 L1384.7 502.2" fill="none" stroke="#2c2c2a" stroke-width="1.5" stroke-linecap="round" stroke-linejoin="round" />
<path d="M1380.6 509.2 L1384.6 508.2" fill="none" stroke="#2c2c2a" stroke-width="1.5" stroke-linecap="round" stroke-linejoin="round" />
<path d="M1380.5 515.3 L1384.5 514.3" fill="none" stroke="#2c2c2a" stroke-width="1.5" stroke-linecap="round" stroke-linejoin="round" />
<path d="M1380.4 521.3 L1384.4 520.3" fill="none" stroke="#2c2c2a" stroke-width="1.5" stroke-linecap="round" stroke-linejoin="round" />
<path d="M1380.3 527.4 L1384.3 526.4" fill="none" stroke="#2c2c2a" stroke-width="1.5" stroke-linecap="round" stroke-linejoin="round" />
<path d="M1380.2 533.4 L1384.2 532.4" fill="none" stroke="#2c2c2a" stroke-width="1.5" stroke-linecap="round" stroke-linejoin="round" />
<path d="M1380.1 539.4 L1384.1 538.4" fill="none" stroke="#2c2c2a" stroke-width="1.5" stroke-linecap="round" stroke-linejoin="round" />
<path d="M1380 545.5 L1384 544.5" fill="none" stroke="#2c2c2a" stroke-width="1.5" stroke-linecap="round" stroke-linejoin="round" />
<path d="M1379.9 551.5 L1383.9 550.5" fill="none" stroke="#2c2c2a" stroke-width="1.5" stroke-linecap="round" stroke-linejoin="round" />
<path d="M1379.8 557.6 L1383.8 556.6" fill="none" stroke="#2c2c2a" stroke-width="1.5" stroke-linecap="round" stroke-linejoin="round" />
<path d="M1196.9 403 L1289.4 379 L1398.2 408.2 L1309.7 436.3Z" fill="url(#gHsTop)" stroke="#2e2e2b" stroke-width="0.8" stroke-linejoin="round" />
<path d="M1309.7 436.3 L1303.2 580.6" fill="none" stroke="#2e2e2b" stroke-width="0.8" stroke-linecap="round" stroke-linejoin="round" />
<path d="M1196.9 403 L1190.4 548.2" fill="none" stroke="#2e2e2b" stroke-width="0.6" stroke-linecap="round" stroke-linejoin="round" />
<ellipse cx="1410" cy="447" rx="5" ry="7" fill="#2b2b29"/><ellipse cx="1404.4" cy="443.3" rx="8.3" ry="9.3" fill="#b3b2ad" stroke="#2a2a28" stroke-width=".8"/><ellipse cx="1401.5" cy="444.5" rx="3" ry="3.6" fill="#3a3a38"/><ellipse cx="1406.5" cy="440" rx="2.6" ry="3.2" fill="#e6e5e0" opacity=".8"/>
<path d="M1115.6 309.4 L1122.2 307.8 L1106.5 718 L1099.8 713Z" fill="#8d8d88" stroke="#2e2e2b" stroke-width="0.7" stroke-linejoin="round" />
<path d="M1119.5 310.5 L1122.2 307.8 L1418.9 396.7 L1442.8 437 L1428.6 792 L1403 817.6 L1110.5 725.7 L1106 723 L1103.8 713Z M1129.4 326.1 L1398.3 407.6 L1430.3 466 L1418.2 762.2 L1383.3 794.6 L1150 723.3 L1116.3 666.3Z" fill="#9a9a95" fill-rule="evenodd" stroke="#2e2e2b" stroke-width=".9" stroke-linejoin="round"/>
<path d="M1129.4 326.1 L1136.7 331.6 L1122.8 664.5 L1116 667Z" fill="#5e5d59" stroke="#2e2e2b" stroke-width="0.6" stroke-linejoin="round" />
<path d="M1136.7 331.6 L1140.5 332.8 L1127.8 663 L1122.8 664.5Z" fill="#9a9994" />
<path d="M1140.5 332.8 L1148 335 L1134.4 663.9 L1127.8 663Z" fill="#5a5955" stroke="#2e2e2b" stroke-width="0.5" stroke-linejoin="round" />
<path d="M1116 667 L1122.8 664.5 L1154 719 L1148.9 723.9Z" fill="#62615c" stroke="#2e2e2b" stroke-width="0.6" stroke-linejoin="round" />
<path d="M1122.8 664.5 L1127.8 663 L1158.5 716.5 L1154 719Z" fill="#9a9994" />
<path d="M1127.8 663 L1134.4 663.9 L1162.8 715 L1158.5 716.5Z" fill="#5f5e59" stroke="#2e2e2b" stroke-width="0.5" stroke-linejoin="round" />
<path d="M1148.9 723.9 L1154 719 L1386 789.5 L1383.3 794.6Z" fill="#8e8d88" stroke="#2e2e2b" stroke-width="0.5" stroke-linejoin="round" />
<path d="M1154 719 L1158.5 716.5 L1389 786 L1386 789.5Z" fill="#6d6c67" stroke="#2e2e2b" stroke-width="0.5" stroke-linejoin="round" />
<path d="M1158.5 716.5 L1162.8 714 L1391.5 783 L1389 786Z" fill="#9c9b96" stroke="#2e2e2b" stroke-width="0.5" stroke-linejoin="round" />
<path d="M1383.3 794.6 L1391.5 783 L1418.4 758 L1418.2 762.2Z" fill="#8e8d88" stroke="#2e2e2b" stroke-width="0.5" stroke-linejoin="round" />
<path d="M1398.3 407.6 L1430.3 466 L1418.2 762.2 L1414 758 L1425.5 467 L1396.5 411Z" fill="#a6a6a1" stroke="#2e2e2b" stroke-width="0.5" stroke-linejoin="round" />
<ellipse cx="1155" cy="685.5" rx="8.5" ry="12.5" fill="#8b8a85" stroke="#2a2a28" stroke-width=".8"/><path d="M1146.5 676.5q6.5-3 9.5 4v12l-8.5 9-3.5-6.5z" fill="#a3a29d" stroke="#2a2a28" stroke-width=".7"/><ellipse cx="1149" cy="687" rx="4.5" ry="8" fill="#2b2b29"/><ellipse cx="1138.5" cy="689" rx="7.8" ry="10" fill="#9d9c97" stroke="#2a2a28" stroke-width=".8"/><ellipse cx="1135" cy="691" rx="3.2" ry="4" fill="#2f2f2d"/><ellipse cx="1141.5" cy="684.5" rx="2.3" ry="3.2" fill="#e2e1dc" opacity=".75"/>
<path d="M1129.4 326.1 L1398.3 407.6 L1396 410.5 L1136.7 331.6Z" fill="#6a6965" stroke="#2e2e2b" stroke-width="0.5" stroke-linejoin="round" />
<path d="M1099.8 713Q1098.5 726.5 1108 730.6L1405.3 824.4L1403 817.6L1110.5 725.7Q1104.2 722.5 1103.8 713Z" fill="#5d5c57" stroke="#2e2e2b" stroke-width=".7" stroke-linejoin="round"/>
<path d="M1115.6 309.4Q1116 298 1132.2 295.3L1122.2 307.8Z" fill="#a3a19a" stroke="#2e2e2b" stroke-width=".7"/>
<path d="M1132.2 295.3 L1426.7 384.4 L1418.9 396.7 L1122.2 307.8Z" fill="url(#gFillet)" stroke="#2e2e2b" stroke-width="0.8" stroke-linejoin="round" />
<path d="M1132.2 295.3 L1309 253 L1610.2 342.7 L1426.7 384.4Z" fill="url(#gTop)" stroke="#2e2e2b" stroke-width="0.9" stroke-linejoin="round" />
<path d="M1426.7 384.4 L1610.2 342.7 L1615.4 349 L1435.6 391.7Z" fill="#8f8b83" stroke="#2e2e2b" stroke-width="0.7" stroke-linejoin="round" />
<path d="M1418.9 396.7 L1426.7 384.4 L1435.6 391.7 L1422.2 398.9Z" fill="#aaa79f" stroke="#2e2e2b" stroke-width="0.7" stroke-linejoin="round" />
<path d="M1422.2 398.9L1435.6 391.7L1457.2 427.8L1442.8 435Z" fill="url(#gChf)" stroke="#2e2e2b" stroke-width=".8"/>
<path d="M1435.6 391.7 L1615.4 349 L1635.2 385.4 L1457.2 427.8Z" fill="#847f77" stroke="#2e2e2b" stroke-width="0.8" stroke-linejoin="round" />
<path d="M1457.2 427.8 L1635.2 385.4 L1640.4 391.7 L1460.2 436.5Z" fill="#a29f97" stroke="#2e2e2b" stroke-width="0.8" stroke-linejoin="round" />
<path d="M1442.8 435 L1457.2 427.8 L1460.2 436.5 L1442.8 439.4Z" fill="#aaa79f" stroke="#2e2e2b" stroke-width="0.7" stroke-linejoin="round" />
<path d="M1460.2 436.5 L1640.4 391.7 L1625.4 748 L1446 790Z" fill="url(#gSide)" stroke="#2e2e2b" stroke-width="0.9" stroke-linejoin="round" />
<path d="M1460.2 436.5 L1470 434 L1456 787.5 L1446 790Z" fill="#9e9c95" stroke="#2e2e2b" stroke-width="0.5" stroke-linejoin="round" />
<path d="M1470 436 L1480 433.5 L1466 785 L1456 787.5Z" fill="#8f8d86" stroke="#5a5852" stroke-width="0.5" stroke-linejoin="round" />
<path d="M1485 431 L1471 776" fill="none" stroke="#55534d" stroke-width="0.7" stroke-linecap="round" stroke-linejoin="round" />
<path d="M1583 406 L1603 401 L1589 747 L1569 752Z" fill="#96948d" stroke="#5a5852" stroke-width="0.6" stroke-linejoin="round" />
<path d="M1603 401 L1612 398.5 L1598 745 L1589 747Z" fill="#a5a39c" stroke="#5a5852" stroke-width="0.5" stroke-linejoin="round" />
<path d="M1612 398.5 L1640.4 391.7 L1625.4 748 L1598 754.5Z" fill="#8b8982" stroke="#3c3b37" stroke-width="0.7" stroke-linejoin="round" />
<path d="M1466 441 L1612 405" fill="none" stroke="#4a4843" stroke-width="0.8" stroke-linecap="round" stroke-linejoin="round" />
<path d="M1466 444.5 L1612 408.5" fill="none" stroke="#6a6862" stroke-width="0.6" stroke-linecap="round" stroke-linejoin="round" />
<path d="M1452 775 L1596 741 L1605 746 L1446 783.5Z" fill="#a19f98" stroke="#4a4843" stroke-width="0.6" stroke-linejoin="round" />
<path d="M1447 783.5 L1605 746 L1611 751 L1446 790Z" fill="#84827b" stroke="#4a4843" stroke-width="0.6" stroke-linejoin="round" />
<g transform="translate(1525.9 505.8) rotate(12)"><ellipse rx="52.5" ry="74" fill="url(#gRing)" stroke="#6a6862" stroke-width=".9"/><ellipse rx="49" ry="70.5" fill="none" stroke="#77756f" stroke-width=".7"/><path d="M-12.2 -39.3L-28.9 -53.6A47 68 0 0 1 -3.3 -67.8L3.1 -42.8Z" fill="#a3a19a" stroke="#66645e" stroke-width=".5" opacity=".85"/><path d="M8.3 -41.3L1.6 -68A47 68 0 0 1 31.4 -50.5L23.6 -26.5Z" fill="#a09e97" stroke="#66645e" stroke-width=".5" opacity=".85"/><path d="M28.8 -11.9L40.7 -34A47 68 0 0 1 47 0L29.5 7.5Z" fill="#7b7973" stroke="#66645e" stroke-width=".5" opacity=".85"/><path d="M24.9 24L44.2 23.3A47 68 0 0 1 27.6 55L13.2 38.6Z" fill="#77756f" stroke="#66645e" stroke-width=".5" opacity=".85"/><path d="M7.3 41.7L22.1 60A47 68 0 0 1 -19.1 62.1L-16.8 35.6Z" fill="#a19f98" stroke="#66645e" stroke-width=".5" opacity=".85"/><path d="M-28.8 11.9L-40.7 34A47 68 0 0 1 -46.9 -4.7L-29.1 -10.4Z" fill="#7d7b75" stroke="#66645e" stroke-width=".5" opacity=".85"/><ellipse cx="-6.5" cy="0" rx="33" ry="45" fill="#97958f" stroke="#5e5c56" stroke-width=".7"/><ellipse cx="-7" cy=".5" rx="30" ry="41.7" fill="#7d7c77" stroke="#67655f" stroke-width=".6"/></g>
<g transform="translate(1518.3 669.8) rotate(12)"><ellipse rx="52.5" ry="74" fill="url(#gRing)" stroke="#6a6862" stroke-width=".9"/><ellipse rx="49" ry="70.5" fill="none" stroke="#77756f" stroke-width=".7"/><path d="M-12.2 -39.3L-28.9 -53.6A47 68 0 0 1 -3.3 -67.8L3.1 -42.8Z" fill="#a3a19a" stroke="#66645e" stroke-width=".5" opacity=".85"/><path d="M8.3 -41.3L1.6 -68A47 68 0 0 1 31.4 -50.5L23.6 -26.5Z" fill="#a09e97" stroke="#66645e" stroke-width=".5" opacity=".85"/><path d="M28.8 -11.9L40.7 -34A47 68 0 0 1 47 0L29.5 7.5Z" fill="#7b7973" stroke="#66645e" stroke-width=".5" opacity=".85"/><path d="M24.9 24L44.2 23.3A47 68 0 0 1 27.6 55L13.2 38.6Z" fill="#77756f" stroke="#66645e" stroke-width=".5" opacity=".85"/><path d="M7.3 41.7L22.1 60A47 68 0 0 1 -19.1 62.1L-16.8 35.6Z" fill="#a19f98" stroke="#66645e" stroke-width=".5" opacity=".85"/><path d="M-28.8 11.9L-40.7 34A47 68 0 0 1 -46.9 -4.7L-29.1 -10.4Z" fill="#7d7b75" stroke="#66645e" stroke-width=".5" opacity=".85"/><ellipse cx="-6.5" cy="0" rx="33" ry="45" fill="#97958f" stroke="#5e5c56" stroke-width=".7"/><ellipse cx="-7" cy=".5" rx="30" ry="41.7" fill="#7d7c77" stroke="#67655f" stroke-width=".6"/></g>
<path d="M1446 790 L1625.4 748 L1616 759.7 L1443.7 799Z" fill="#6a6862" stroke="#2e2e2b" stroke-width="0.7" stroke-linejoin="round" />
<path d="M1443.7 799 L1616 759.7 L1625.4 748 L1593 783 L1414.7 825.7Z" fill="#85817a" stroke="#2e2e2b" stroke-width="0.8" stroke-linejoin="round" />
<path d="M1442.8 439.4 L1460.2 436.5 L1446 790 L1428.6 792Z" fill="url(#gPillar)" stroke="#2e2e2b" stroke-width="0.8" stroke-linejoin="round" />
<path d="M1428.6 792 L1446 790 L1443.7 799 L1414.7 825.7 L1405.3 824.4 L1403 817.6Z" fill="#8e8c86" stroke="#2e2e2b" stroke-width="0.8" stroke-linejoin="round" />
<path d="M1443.7 799 L1428.6 805" fill="none" stroke="#2e2e2b" stroke-width="0.5" stroke-linecap="round" stroke-linejoin="round" />
</g>
<g id="viewcube">
<defs><filter id="vcb" x="-20%" y="-20%" width="140%" height="140%"><feGaussianBlur stdDeviation="0.6"/></filter><filter id="vcs" x="-30%" y="-80%" width="160%" height="260%"><feGaussianBlur stdDeviation="4"/></filter></defs>
<ellipse cx="1862" cy="212" rx="36" ry="9" fill="#d8d8d8" opacity=".55" filter="url(#vcs)"/>
<g filter="url(#vcb)"><path d="M1824.4 156.1L1857.2 165L1856.1 214.4L1823.9 200Z" fill="#e3e3e6" stroke="#d2d2d6" stroke-width=".6"/><path d="M1857.2 165L1891.7 158.3L1887.8 202.8L1856.1 214.4Z" fill="#e9e9ec" stroke="#d2d2d6" stroke-width=".6"/><path d="M1824.4 156.1L1855.6 151.7L1891.7 158.3L1857.2 165Z" fill="#efeff1" stroke="#d8d8dc" stroke-width=".6"/><path d="M1836 154.5l20 4.5M1846 153l22 5M1868 154l-22 8M1880 156.2l-23 8.5" stroke="#dcdce0" stroke-width=".6"/><text transform="matrix(1 .27 0 1 1839.4 187.8)" font-size="9.5" font-weight="bold" fill="#9a9a9e" text-anchor="middle" textLength="25" lengthAdjust="spacingAndGlyphs">FRONT</text><text transform="matrix(1 -.19 0 1 1873.5 189)" font-size="9.5" font-weight="bold" fill="#9a9a9e" text-anchor="middle" textLength="23" lengthAdjust="spacingAndGlyphs">RIGHT</text><path d="M1823.2 148.3L1823.4 201.7" stroke="#7a7ad2" stroke-width="1.6" opacity=".85"/><path d="M1823.4 201.7L1862 220" stroke="#e88a8a" stroke-width="1.6" opacity=".85"/><text x="1822.8" y="145.5" font-size="13" font-weight="bold" fill="#8888d0" text-anchor="middle">Z</text><text x="1867.6" y="226.5" font-size="12" font-weight="bold" fill="#ee8f8f" text-anchor="middle">X</text></g>
</g>
<rect x="1915.5" y="114" width="4.5" height="916" fill="#f5f5f5"/><rect x="1919" y="32" width="1" height="1048" fill="#c4c4c4"/><rect x="0" y="114" width="1.8" height="916" fill="#dcdcdc"/>
<g id="browser">
<rect x="4.5" y="121.5" width="299" height="24" fill="#f1f1f1" stroke="#d2d2d2"/>
<path d="M9 133.5l4.5-3v6zM14.5 133.5l4.5-3v6z" fill="#333"/>
<text x="29.6" y="137.4" font-size="11" fill="#555" font-weight="normal" textLength="48.9" lengthAdjust="spacingAndGlyphs" >BROWSER</text>
<circle cx="287.4" cy="133.4" r="4.6" fill="#2b2b2b"/><rect x="284.7" y="132.7" width="5.4" height="1.5" fill="#f1f1f1"/>
<rect x="40" y="151" width="208" height="20" fill="#efefef" fill-opacity=".9"/>
<path d="M31.5 166.5v-11l-11 11z" fill="#7d7d7d" stroke="#444" stroke-width="1" stroke-linejoin="round"/>
<path d="M42.5 161q8-8.5 16 0q-8 8.5-16 0z" fill="#9a9a9a"/><circle cx="50.5" cy="161" r="3.3" fill="#efefef"/><circle cx="50.5" cy="161" r="1.9" fill="#8a8a8a"/>
<rect x="65" y="152.5" width="157.5" height="17" fill="#a0a0a0"/>
<g transform="translate(0 161)"><path d="M69.5 -4l2-2.5h4.5v13h-6.5z" fill="#fafafa" stroke="#777" stroke-width=".8" stroke-linejoin="round"/><path d="M69.5 -4h4.5v10.5M74 -4l2-2.5" fill="none" stroke="#b0b0b0" stroke-width=".7"/><path d="M74.5 1.5l2-2h5.5v5.5l-2 2h-5.5z" fill="#fafafa" stroke="#777" stroke-width=".8" stroke-linejoin="round"/><path d="M74.5 1.5h5.5v5.5M80 1.5l2-2" fill="none" stroke="#b0b0b0" stroke-width=".7"/></g>
<text x="98" y="165.1" font-size="11.5" fill="#ffffff" font-weight="bold" textLength="112.5" lengthAdjust="spacingAndGlyphs" >N100 Gaming PC v8</text>
<circle cx="233.5" cy="161" r="5.8" fill="#fdfdfd" stroke="#444" stroke-width="1.1"/><circle cx="233.5" cy="161" r="2.3" fill="#333"/>
<rect x="58" y="175" width="142" height="20" fill="#efefef" fill-opacity=".9"/>
<path d="M40.5 178.5v13l8-6.5z" fill="#fff" stroke="#555" stroke-width="1.5" stroke-linejoin="round"/>
<g transform="translate(67.5 185)"><circle r="4.6" fill="#777"/><rect x="-1.5" y="-6.6" width="3" height="3.5" fill="#777" transform="rotate(0)"/><rect x="-1.5" y="-6.6" width="3" height="3.5" fill="#777" transform="rotate(45)"/><rect x="-1.5" y="-6.6" width="3" height="3.5" fill="#777" transform="rotate(90)"/><rect x="-1.5" y="-6.6" width="3" height="3.5" fill="#777" transform="rotate(135)"/><rect x="-1.5" y="-6.6" width="3" height="3.5" fill="#777" transform="rotate(180)"/><rect x="-1.5" y="-6.6" width="3" height="3.5" fill="#777" transform="rotate(225)"/><rect x="-1.5" y="-6.6" width="3" height="3.5" fill="#777" transform="rotate(270)"/><rect x="-1.5" y="-6.6" width="3" height="3.5" fill="#777" transform="rotate(315)"/><circle r="2" fill="#efefef"/></g>
<text x="87" y="189" font-size="11" fill="#4a4a4a" font-weight="normal" textLength="100.5" lengthAdjust="spacingAndGlyphs" >Document Settings</text>
<rect x="58" y="199" width="113.5" height="20" fill="#efefef" fill-opacity=".9"/>
<path d="M40.5 202.5v13l8-6.5z" fill="#fff" stroke="#555" stroke-width="1.5" stroke-linejoin="round"/>
<path d="M61 202.5h6l1.5 2h8.5v10.5h-16z" fill="#8c8c8c"/><path d="M61 206h16" stroke="#a8a8a8" stroke-width="1"/>
<text x="91.5" y="213" font-size="11" fill="#4a4a4a" font-weight="normal" textLength="70.5" lengthAdjust="spacingAndGlyphs" >Named Views</text>
<rect x="58" y="223" width="103" height="20" fill="#efefef" fill-opacity=".9"/>
<path d="M40.5 226.5v13l8-6.5z" fill="#fff" stroke="#555" stroke-width="1.5" stroke-linejoin="round"/>
<path d="M61 233q8-8 16 0q-8 8-16 0z" fill="none" stroke="#b4b4b4" stroke-width="1"/><circle cx="69" cy="233" r="3" fill="none" stroke="#b4b4b4" stroke-width="1"/><path d="M63.5 228l11 10" stroke="#b4b4b4" stroke-width="1.1"/>
<path d="M86 226.5h6l1.5 2h8.5v10.5h-16z" fill="#8c8c8c"/><path d="M86 230h16" stroke="#a8a8a8" stroke-width="1"/>
<text x="116" y="237" font-size="11" fill="#4a4a4a" font-weight="normal" textLength="32.5" lengthAdjust="spacingAndGlyphs" >Origin</text>
<rect x="58" y="247" width="110.5" height="20" fill="#efefef" fill-opacity=".9"/>
<path d="M40.5 250.5v13l8-6.5z" fill="#fff" stroke="#555" stroke-width="1.5" stroke-linejoin="round"/>
<path d="M61 257q8-8 16 0q-8 8-16 0z" fill="none" stroke="#b4b4b4" stroke-width="1"/><circle cx="69" cy="257" r="3" fill="none" stroke="#b4b4b4" stroke-width="1"/><path d="M63.5 252l11 10" stroke="#b4b4b4" stroke-width="1.1"/>
<path d="M86 250.5h6l1.5 2h8.5v10.5h-16z" fill="#8c8c8c"/><path d="M86 254h16" stroke="#a8a8a8" stroke-width="1"/>
<text x="116" y="261" font-size="11" fill="#4a4a4a" font-weight="normal" textLength="43.5" lengthAdjust="spacingAndGlyphs" >Analysis</text>
<rect x="58" y="271" width="99" height="20" fill="#efefef" fill-opacity=".9"/>
<path d="M40.5 274.5v13l8-6.5z" fill="#fff" stroke="#555" stroke-width="1.5" stroke-linejoin="round"/>
<path d="M61 281q8-8 16 0q-8 8-16 0z" fill="none" stroke="#b4b4b4" stroke-width="1"/><circle cx="69" cy="281" r="3" fill="none" stroke="#b4b4b4" stroke-width="1"/><path d="M63.5 276l11 10" stroke="#b4b4b4" stroke-width="1.1"/>
<path d="M86 274.5h6l1.5 2h8.5v10.5h-16z" fill="#8c8c8c"/><path d="M86 278h16" stroke="#a8a8a8" stroke-width="1"/>
<text x="115.5" y="285" font-size="11" fill="#4a4a4a" font-weight="normal" textLength="30" lengthAdjust="spacingAndGlyphs" >Joints</text>
<rect x="58" y="295" width="103" height="20" fill="#efefef" fill-opacity=".9"/>
<path d="M49.5 310.5v-11l-11 11z" fill="#7d7d7d" stroke="#444" stroke-width="1" stroke-linejoin="round"/>
<path d="M61 305q8-8.5 16 0q-8 8.5-16 0z" fill="#9a9a9a"/><circle cx="69" cy="305" r="3.3" fill="#efefef"/><circle cx="69" cy="305" r="1.9" fill="#8a8a8a"/>
<path d="M86 298.5h6l1.5 2h8.5v10.5h-16z" fill="#8c8c8c"/><path d="M86 302h16" stroke="#a8a8a8" stroke-width="1"/>
<text x="116" y="309" font-size="11" fill="#4a4a4a" font-weight="normal" textLength="34.5" lengthAdjust="spacingAndGlyphs" >Bodies</text>
<rect x="76" y="319" width="122.5" height="20" fill="#efefef" fill-opacity=".9"/>
<path d="M79 329q8-8.5 16 0q-8 8.5-16 0z" fill="#9a9a9a"/><circle cx="87" cy="329" r="3.3" fill="#efefef"/><circle cx="87" cy="329" r="1.9" fill="#8a8a8a"/>
<rect x="104.5" y="321.5" width="15" height="15" rx="3.5" fill="#fbfbfb" stroke="#7c7c7c" stroke-width="1.1"/><path d="M108.5 326v7.5q3.5 2 7 0v-7.5z" fill="#dcdcdc"/><ellipse cx="112" cy="326" rx="3.5" ry="1.3" fill="#f2f2f2" stroke="#cfcfcf" stroke-width=".5"/>
<text x="134" y="333" font-size="11" fill="#4a4a4a" font-weight="normal" textLength="54.5" lengthAdjust="spacingAndGlyphs" >Case Body</text>
<rect x="76" y="343" width="142.5" height="20" fill="#efefef" fill-opacity=".9"/>
<path d="M79 353q8-8.5 16 0q-8 8.5-16 0z" fill="#9a9a9a"/><circle cx="87" cy="353" r="3.3" fill="#efefef"/><circle cx="87" cy="353" r="1.9" fill="#8a8a8a"/>
<rect x="104.5" y="345.5" width="15" height="15" rx="3.5" fill="#fbfbfb" stroke="#7c7c7c" stroke-width="1.1"/><path d="M108.5 350v7.5q3.5 2 7 0v-7.5z" fill="#dcdcdc"/><ellipse cx="112" cy="350" rx="3.5" ry="1.3" fill="#f2f2f2" stroke="#cfcfcf" stroke-width=".5"/>
<text x="134" y="357" font-size="11" fill="#4a4a4a" font-weight="normal" textLength="73" lengthAdjust="spacingAndGlyphs" >Front Window</text>
<rect x="76" y="367" width="143.5" height="20" fill="#efefef" fill-opacity=".9"/>
<path d="M79 377q8-8 16 0q-8 8-16 0z" fill="none" stroke="#b4b4b4" stroke-width="1"/><circle cx="87" cy="377" r="3" fill="none" stroke="#b4b4b4" stroke-width="1"/><path d="M81.5 372l11 10" stroke="#b4b4b4" stroke-width="1.1"/>
<path d="M104.5 373l4-3.5h7l4 3.5v8l-4 3.5h-7l-4-3.5z" fill="#c9a227" stroke="#8a6d10" stroke-width="1"/><path d="M105.5 377h13M105.5 380h13" stroke="#8a6d10" stroke-width=".9"/><ellipse cx="112" cy="373" rx="5" ry="2" fill="#e6c65a" stroke="#8a6d10" stroke-width=".6"/>
<text x="134" y="381" font-size="11" fill="#4a4a4a" font-weight="normal" textLength="48" lengthAdjust="spacingAndGlyphs" >RTX3080</text>
<path d="M206 369.5l7.5 13.5h-15z" fill="#f1d53a" stroke="#a89838" stroke-width="1" stroke-linejoin="round"/><path d="M206 374v5" stroke="#222" stroke-width="1.6"/><circle cx="206" cy="381" r=".9" fill="#222"/>
<rect x="76" y="391" width="135" height="20" fill="#efefef" fill-opacity=".9"/>
<path d="M79 401q8-8 16 0q-8 8-16 0z" fill="none" stroke="#b4b4b4" stroke-width="1"/><circle cx="87" cy="401" r="3" fill="none" stroke="#b4b4b4" stroke-width="1"/><path d="M81.5 396l11 10" stroke="#b4b4b4" stroke-width="1.1"/>
<rect x="104.5" y="393.5" width="15" height="15" rx="3.5" fill="#fbfbfb" stroke="#7c7c7c" stroke-width="1.1"/><path d="M108.5 398v7.5q3.5 2 7 0v-7.5z" fill="#dcdcdc"/><ellipse cx="112" cy="398" rx="3.5" ry="1.3" fill="#f2f2f2" stroke="#cfcfcf" stroke-width=".5"/>
<text x="134" y="405" font-size="11" fill="#4a4a4a" font-weight="normal" textLength="67" lengthAdjust="spacingAndGlyphs" >Side Window</text>
<rect x="76" y="415" width="114.5" height="20" fill="#efefef" fill-opacity=".9"/>
<path d="M79 425q8-8.5 16 0q-8 8.5-16 0z" fill="#9a9a9a"/><circle cx="87" cy="425" r="3.3" fill="#efefef"/><circle cx="87" cy="425" r="1.9" fill="#8a8a8a"/>
<rect x="104.5" y="417.5" width="15" height="15" rx="3.5" fill="#fbfbfb" stroke="#7c7c7c" stroke-width="1.1"/><path d="M108.5 422v7.5q3.5 2 7 0v-7.5z" fill="#dcdcdc"/><ellipse cx="112" cy="422" rx="3.5" ry="1.3" fill="#f2f2f2" stroke="#cfcfcf" stroke-width=".5"/>
<text x="134" y="429" font-size="11" fill="#4a4a4a" font-weight="normal" textLength="46" lengthAdjust="spacingAndGlyphs" >Heatsink</text>
<rect x="76" y="439" width="139" height="20" fill="#efefef" fill-opacity=".9"/>
<path d="M79 449q8-8.5 16 0q-8 8.5-16 0z" fill="#9a9a9a"/><circle cx="87" cy="449" r="3.3" fill="#efefef"/><circle cx="87" cy="449" r="1.9" fill="#8a8a8a"/>
<rect x="104.5" y="441.5" width="15" height="15" rx="3.5" fill="#fbfbfb" stroke="#7c7c7c" stroke-width="1.1"/><path d="M108.5 446v7.5q3.5 2 7 0v-7.5z" fill="#dcdcdc"/><ellipse cx="112" cy="446" rx="3.5" ry="1.3" fill="#f2f2f2" stroke="#cfcfcf" stroke-width=".5"/>
<text x="134" y="453" font-size="11" fill="#4a4a4a" font-weight="normal" textLength="69" lengthAdjust="spacingAndGlyphs" >Monitor Back</text>
<rect x="76" y="463" width="139" height="20" fill="#efefef" fill-opacity=".9"/>
<path d="M79 473q8-8.5 16 0q-8 8.5-16 0z" fill="#9a9a9a"/><circle cx="87" cy="473" r="3.3" fill="#efefef"/><circle cx="87" cy="473" r="1.9" fill="#8a8a8a"/>
<rect x="104.5" y="465.5" width="15" height="15" rx="3.5" fill="#fbfbfb" stroke="#7c7c7c" stroke-width="1.1"/><path d="M108.5 470v7.5q3.5 2 7 0v-7.5z" fill="#dcdcdc"/><ellipse cx="112" cy="470" rx="3.5" ry="1.3" fill="#f2f2f2" stroke="#cfcfcf" stroke-width=".5"/>
<text x="134" y="477" font-size="11" fill="#4a4a4a" font-weight="normal" textLength="69" lengthAdjust="spacingAndGlyphs" >Monitor Base</text>
<rect x="76" y="487" width="199.5" height="20" fill="#efefef" fill-opacity=".9"/>
<path d="M79 497q8-8.5 16 0q-8 8.5-16 0z" fill="#9a9a9a"/><circle cx="87" cy="497" r="3.3" fill="#efefef"/><circle cx="87" cy="497" r="1.9" fill="#8a8a8a"/>
<rect x="104.5" y="489.5" width="15" height="15" rx="3.5" fill="#fbfbfb" stroke="#7c7c7c" stroke-width="1.1"/><path d="M108.5 494v7.5q3.5 2 7 0v-7.5z" fill="#dcdcdc"/><ellipse cx="112" cy="494" rx="3.5" ry="1.3" fill="#f2f2f2" stroke="#cfcfcf" stroke-width=".5"/>
<text x="134" y="501" font-size="11" fill="#4a4a4a" font-weight="normal" textLength="131" lengthAdjust="spacingAndGlyphs" >Heatsink Bracket Bottom</text>
<rect x="76" y="511" width="183" height="20" fill="#efefef" fill-opacity=".9"/>
<path d="M79 521q8-8.5 16 0q-8 8.5-16 0z" fill="#9a9a9a"/><circle cx="87" cy="521" r="3.3" fill="#efefef"/><circle cx="87" cy="521" r="1.9" fill="#8a8a8a"/>
<rect x="104.5" y="513.5" width="15" height="15" rx="3.5" fill="#fbfbfb" stroke="#7c7c7c" stroke-width="1.1"/><path d="M108.5 518v7.5q3.5 2 7 0v-7.5z" fill="#dcdcdc"/><ellipse cx="112" cy="518" rx="3.5" ry="1.3" fill="#f2f2f2" stroke="#cfcfcf" stroke-width=".5"/>
<text x="134" y="525" font-size="11" fill="#4a4a4a" font-weight="normal" textLength="112.5" lengthAdjust="spacingAndGlyphs" >Heatsink Bracket Top</text>
<rect x="58" y="535" width="115" height="20" fill="#efefef" fill-opacity=".9"/>
<path d="M40.5 538.5v13l8-6.5z" fill="#fff" stroke="#555" stroke-width="1.5" stroke-linejoin="round"/>
<path d="M61 545q8-8.5 16 0q-8 8.5-16 0z" fill="#9a9a9a"/><circle cx="69" cy="545" r="3.3" fill="#efefef"/><circle cx="69" cy="545" r="1.9" fill="#8a8a8a"/>
<path d="M86 538.5h6l1.5 2h8.5v10.5h-16z" fill="#8c8c8c"/><path d="M86 542h16" stroke="#a8a8a8" stroke-width="1"/>
<text x="116" y="549" font-size="11" fill="#4a4a4a" font-weight="normal" textLength="46" lengthAdjust="spacingAndGlyphs" >Sketches</text>
<rect x="58" y="559" width="135" height="20" fill="#efefef" fill-opacity=".9"/>
<path d="M40.5 562.5v13l8-6.5z" fill="#fff" stroke="#555" stroke-width="1.5" stroke-linejoin="round"/>
<path d="M61 569q8-8 16 0q-8 8-16 0z" fill="none" stroke="#b4b4b4" stroke-width="1"/><circle cx="69" cy="569" r="3" fill="none" stroke="#b4b4b4" stroke-width="1"/><path d="M63.5 564l11 10" stroke="#b4b4b4" stroke-width="1.1"/>
<path d="M86 562.5h6l1.5 2h8.5v10.5h-16z" fill="#8c8c8c"/><path d="M86 566h16" stroke="#a8a8a8" stroke-width="1"/>
<text x="116" y="573" font-size="11" fill="#4a4a4a" font-weight="normal" textLength="68.5" lengthAdjust="spacingAndGlyphs" >Construction</text>
<rect x="58" y="583" width="168" height="20" fill="#efefef" fill-opacity=".9"/>
<path d="M40.5 586.5v13l8-6.5z" fill="#fff" stroke="#555" stroke-width="1.5" stroke-linejoin="round"/>
<path d="M61 593q8-8.5 16 0q-8 8.5-16 0z" fill="#9a9a9a"/><circle cx="69" cy="593" r="3.3" fill="#efefef"/><circle cx="69" cy="593" r="1.9" fill="#8a8a8a"/>
<rect x="86.5" y="588" width="12.5" height="13" rx="1.5" fill="#f4f4f4" stroke="#6e6e6e" stroke-width="1"/><path d="M92.5 588v13M86.5 594.5h12.5" stroke="#6e6e6e" stroke-width="1"/><path d="M99.5 585v8M97.5 587.5h4M97.3 590.5q2 4 4.5 0" stroke="#555" stroke-width="1" fill="none"/>
<g transform="rotate(-35 119 593)" fill="none" stroke="#333" stroke-width="1.8"><rect x="110" y="589.5" width="10.5" height="6.6" rx="3.3"/><rect x="117.5" y="589.5" width="10.5" height="6.6" rx="3.3"/></g>
<text x="141" y="597" font-size="11" fill="#4a4a4a" font-weight="normal" textLength="76" lengthAdjust="spacingAndGlyphs" >Radxa X4 v1:1</text>
<rect x="58" y="607" width="244" height="20" fill="#efefef" fill-opacity=".9"/>
<path d="M40.5 610.5v13l8-6.5z" fill="#fff" stroke="#555" stroke-width="1.5" stroke-linejoin="round"/>
<path d="M61 617q8-8.5 16 0q-8 8.5-16 0z" fill="#9a9a9a"/><circle cx="69" cy="617" r="3.3" fill="#efefef"/><circle cx="69" cy="617" r="1.9" fill="#8a8a8a"/>
<path d="M86.5 611h5.5v5.5h5.5l3.5-2v8l-3.5 3h-11z" fill="#f8f8f8" stroke="#6e6e6e" stroke-width="1"/><path d="M86.5 611l2.5-2h3.5v5.5" fill="#f8f8f8" stroke="#6e6e6e" stroke-width="1"/><path d="M92 616.5v8.5" stroke="#8a8a8a" stroke-width=".8"/>
<g transform="rotate(-35 119 617)" fill="none" stroke="#333" stroke-width="1.8"><rect x="110" y="613.5" width="10.5" height="6.6" rx="3.3"/><rect x="117.5" y="613.5" width="10.5" height="6.6" rx="3.3"/></g>
<text x="141" y="621" font-size="11" fill="#4a4a4a" font-weight="normal" textLength="150.5" lengthAdjust="spacingAndGlyphs" >Pi 5 Connector Adaptor v1:1</text>
<rect x="58" y="631" width="242" height="20" fill="#efefef" fill-opacity=".9"/>
<path d="M40.5 634.5v13l8-6.5z" fill="#fff" stroke="#555" stroke-width="1.5" stroke-linejoin="round"/>
<path d="M61 641q8-8.5 16 0q-8 8.5-16 0z" fill="#9a9a9a"/><circle cx="69" cy="641" r="3.3" fill="#efefef"/><circle cx="69" cy="641" r="1.9" fill="#8a8a8a"/>
<path d="M86.5 637.5l3.5-3.5h10q1.5 0 1.5 1.5v9.5l-3.5 3.5h-10q-1.5 0-1.5-1.5z" fill="#fafafa" stroke="#6a6a6a" stroke-width="1" stroke-linejoin="round"/><path d="M87 638h10.5v10.5h-9.5q-1 0-1-1z" fill="#e2e2e4"/><path d="M86.5 637.5h11v11M97.5 637.5l3.3-3.3" fill="none" stroke="#8a8a8a" stroke-width=".8"/>
<text x="116" y="645" font-size="11" fill="#4a4a4a" font-weight="normal" textLength="177" lengthAdjust="spacingAndGlyphs" >1939K17_Low-Voltage Equipm...</text>
<rect x="58" y="655" width="242" height="20" fill="#efefef" fill-opacity=".9"/>
<path d="M40.5 658.5v13l8-6.5z" fill="#fff" stroke="#555" stroke-width="1.5" stroke-linejoin="round"/>
<path d="M61 665q8-8.5 16 0q-8 8.5-16 0z" fill="#9a9a9a"/><circle cx="69" cy="665" r="3.3" fill="#efefef"/><circle cx="69" cy="665" r="1.9" fill="#8a8a8a"/>
<path d="M86.5 661.5l3.5-3.5h10q1.5 0 1.5 1.5v9.5l-3.5 3.5h-10q-1.5 0-1.5-1.5z" fill="#fafafa" stroke="#6a6a6a" stroke-width="1" stroke-linejoin="round"/><path d="M87 662h10.5v10.5h-9.5q-1 0-1-1z" fill="#e2e2e4"/><path d="M86.5 661.5h11v11M97.5 661.5l3.3-3.3" fill="none" stroke="#8a8a8a" stroke-width=".8"/>
<text x="116" y="669" font-size="11" fill="#4a4a4a" font-weight="normal" textLength="177" lengthAdjust="spacingAndGlyphs" >1939K17_Low-Voltage Equipm...</text>
<rect x="58" y="679" width="242" height="20" fill="#efefef" fill-opacity=".9"/>
<path d="M40.5 682.5v13l8-6.5z" fill="#fff" stroke="#555" stroke-width="1.5" stroke-linejoin="round"/>
<path d="M61 689q8-8.5 16 0q-8 8.5-16 0z" fill="#9a9a9a"/><circle cx="69" cy="689" r="3.3" fill="#efefef"/><circle cx="69" cy="689" r="1.9" fill="#8a8a8a"/>
<path d="M86.5 685.5l3.5-3.5h10q1.5 0 1.5 1.5v9.5l-3.5 3.5h-10q-1.5 0-1.5-1.5z" fill="#fafafa" stroke="#6a6a6a" stroke-width="1" stroke-linejoin="round"/><path d="M87 686h10.5v10.5h-9.5q-1 0-1-1z" fill="#e2e2e4"/><path d="M86.5 685.5h11v11M97.5 685.5l3.3-3.3" fill="none" stroke="#8a8a8a" stroke-width=".8"/>
<text x="116" y="693" font-size="11" fill="#4a4a4a" font-weight="normal" textLength="177" lengthAdjust="spacingAndGlyphs" >92095A181_Button Head Hex D...</text>
<rect x="58" y="703" width="242" height="20" fill="#efefef" fill-opacity=".9"/>
<path d="M40.5 706.5v13l8-6.5z" fill="#fff" stroke="#555" stroke-width="1.5" stroke-linejoin="round"/>
<path d="M61 713q8-8.5 16 0q-8 8.5-16 0z" fill="#9a9a9a"/><circle cx="69" cy="713" r="3.3" fill="#efefef"/><circle cx="69" cy="713" r="1.9" fill="#8a8a8a"/>
<path d="M86.5 709.5l3.5-3.5h10q1.5 0 1.5 1.5v9.5l-3.5 3.5h-10q-1.5 0-1.5-1.5z" fill="#fafafa" stroke="#6a6a6a" stroke-width="1" stroke-linejoin="round"/><path d="M87 710h10.5v10.5h-9.5q-1 0-1-1z" fill="#e2e2e4"/><path d="M86.5 709.5h11v11M97.5 709.5l3.3-3.3" fill="none" stroke="#8a8a8a" stroke-width=".8"/>
<text x="116" y="717" font-size="11" fill="#4a4a4a" font-weight="normal" textLength="177" lengthAdjust="spacingAndGlyphs" >94500A222_316 Stainless Steel...</text>
<rect x="58" y="727" width="239" height="20" fill="#efefef" fill-opacity=".9"/>
<path d="M40.5 730.5v13l8-6.5z" fill="#fff" stroke="#555" stroke-width="1.5" stroke-linejoin="round"/>
<path d="M61 737q8-8.5 16 0q-8 8.5-16 0z" fill="#9a9a9a"/><circle cx="69" cy="737" r="3.3" fill="#efefef"/><circle cx="69" cy="737" r="1.9" fill="#8a8a8a"/>
<path d="M86.5 733.5l3.5-3.5h10q1.5 0 1.5 1.5v9.5l-3.5 3.5h-10q-1.5 0-1.5-1.5z" fill="#fafafa" stroke="#6a6a6a" stroke-width="1" stroke-linejoin="round"/><path d="M87 734h10.5v10.5h-9.5q-1 0-1-1z" fill="#e2e2e4"/><path d="M86.5 733.5h11v11M97.5 733.5l3.3-3.3" fill="none" stroke="#8a8a8a" stroke-width=".8"/>
<g transform="rotate(-35 119 737)" fill="none" stroke="#333" stroke-width="1.8"><rect x="110" y="733.5" width="10.5" height="6.6" rx="3.3"/><rect x="117.5" y="733.5" width="10.5" height="6.6" rx="3.3"/></g>
<text x="140.5" y="741" font-size="11" fill="#4a4a4a" font-weight="normal" textLength="146" lengthAdjust="spacingAndGlyphs" >Waveshare 7.9 Display v1:1</text>
</g>
<g id="bottom">
<rect x="4.5" y="1000.5" width="299" height="25" fill="#f1f1f1" stroke="#d2d2d2"/>
<text x="29.3" y="1016.8" font-size="11" fill="#555" font-weight="normal" textLength="61.2" lengthAdjust="spacingAndGlyphs" >COMMENTS</text>
<circle cx="287.4" cy="1013.3" r="4.6" fill="#2b2b2b"/><path d="M284.6 1013.3h5.6M287.4 1010.5v5.6" stroke="#f1f1f1" stroke-width="1.4"/>
<rect x="842" y="1000.5" width="237.5" height="23" rx="2" fill="#f0f0f0" fill-opacity=".94"/>
<g transform="translate(853.5 1011.7)"><ellipse rx="3.3" ry="7.5" fill="#f2f6fa" stroke="#66727f" stroke-width="1" transform="rotate(8)"/><ellipse rx="7.5" ry="3.3" fill="#eef2f6" fill-opacity=".7" stroke="#66727f" stroke-width="1" transform="rotate(-10)"/><circle cx="-1" r="1.1" fill="#3a8fd4"/><circle cx="3" cy="-2" r=".8" fill="#3a8fd4"/><path d="M-9.5 0l2.3-2.3v4.6z" fill="#66727f"/></g>
<path d="M866.2 1010.3h5l-2.5 3.4z" fill="#333"/>
<g transform="translate(886 1012)"><path d="M-6.5 -3.5l3-4 2 2 5-2.5v4.5" fill="#ddd" stroke="#777" stroke-width="1"/><rect x="-7.5" y="-3.5" width="15" height="10.5" fill="#ececec" stroke="#6a6a6a" stroke-width="1.1"/><rect x="-4.5" y="0" width="9" height="4" fill="#b8b8b8" stroke="#777" stroke-width=".9"/></g>
<g transform="translate(911.7 1011.5)"><path d="M-4.5 7.5q-3-4-4.5-7.5q1-1.5 2.5 0l1.5 2v-7.5q1.2-1.5 2.2 0v-1.5q1.2-1.5 2.3 0v1q1.2-1.3 2.3 0v1.5q1.2-1.2 2.2.2v7.8q0 2.5-2 4z" fill="#fafafa" stroke="#5c5c5c" stroke-width=".9"/><path d="M-2.8-5v5M-.5-6v6M1.8-5v5" stroke="#666" stroke-width=".7"/></g>
<g transform="translate(936.5 1012)"><circle cx="-1.5" cy="-1" r="4.7" fill="#e6eef2" stroke="#5a5a5a" stroke-width="1.1"/><path d="M2 3l4.5 4.5" stroke="#444" stroke-width="2"/><path d="M5.5-6.5h4M7.5-8.5v4M5.5-2.5h4" stroke="#555" stroke-width=".8"/></g>
<g transform="translate(963.5 1012)"><rect x="-8" y="-8" width="14.5" height="14.5" fill="none" stroke="#777" stroke-width=".8" stroke-dasharray="2.5 1.5"/><circle cx="-.5" cy="-1" r="5.3" fill="#e6eef2" stroke="#5a5a5a" stroke-width="1.1"/><path d="M3.5 3l5 5" stroke="#444" stroke-width="2"/></g>
<path d="M976.8 1010.3h5l-2.5 3.4z" fill="#333"/>
<g transform="translate(996.7 1011.5)"><rect x="-8" y="-7.5" width="16" height="12" fill="#cfcfcf" stroke="#7a7a7a" stroke-width="1"/><rect x="-6" y="-5.5" width="12" height="8" fill="#a6c2e6" stroke="#7a92b4" stroke-width=".6"/><path d="M-2 4.5h4v2h2.5v1.5h-9v-1.5h2.5z" fill="#9a9a9a"/></g>
<path d="M1007.5 1010.3h5l-2.5 3.4z" fill="#333"/>
<g transform="translate(1027.7 1011.7)"><rect x="-8" y="-8" width="16" height="16" fill="#e6e6e6" stroke="#777" stroke-width=".9"/><path d="M-4.8-8v16M-1.6-8v16M1.6-8v16M4.8-8v16M-8-4.8h16M-8-1.6h16M-8 1.6h16M-8 4.8h16" stroke="#8a8a8a" stroke-width=".9"/></g>
<path d="M1038.2 1010.3h5l-2.5 3.4z" fill="#333"/>
<g transform="translate(1058.3 1011.7)"><rect x="-8" y="-7" width="16" height="14" fill="#8eaad2" stroke="#6c86aa" stroke-width=".9"/><path d="M0-7v14M-8 0h16" stroke="#e4e8ee" stroke-width="1.3"/><rect x="-5.5" y="-5" width="3.5" height="3" rx="1" fill="none" stroke="#7a94b8" stroke-width=".6"/><rect x="2" y="-5" width="3.5" height="3" rx="1" fill="none" stroke="#7a94b8" stroke-width=".6"/><rect x="-5.5" y="2" width="3.5" height="3" rx="1" fill="none" stroke="#7a94b8" stroke-width=".6"/><rect x="2" y="2" width="3.5" height="3" rx="1" fill="none" stroke="#7a94b8" stroke-width=".6"/></g>
<path d="M1069.5 1010.3h5l-2.5 3.4z" fill="#333"/>
<rect x="0" y="1033" width="1920" height="47" fill="#f0f0f0"/>
<rect x="0" y="1030" width="1920" height="3" fill="#cfcfcf"/>
<path d="M963 1033.3h950v6.4h-950q-3.5 0-3.5-3.2t3.5-3.2z" fill="#c6c6c6"/>
<rect x="10.8" y="1054" width="2" height="12" fill="#4f4f4f"/><path d="M22 1054v12l-9-6z" fill="#4f4f4f"/>
<path d="M44.5 1054v12l-9-6z" fill="#4f4f4f"/><rect x="46" y="1057.5" width="2" height="5" fill="#4f4f4f"/>
<path d="M61 1053v14l11.5-7z" fill="#4f4f4f"/>
<rect x="85" y="1057.5" width="2" height="5" fill="#4f4f4f"/><path d="M88.5 1054v12l9-6z" fill="#4f4f4f"/>
<path d="M111 1054v12l9-6z" fill="#4f4f4f"/><rect x="120" y="1054" width="2" height="12" fill="#4f4f4f"/>
<rect x="148" y="1072.3" width="1712" height="1.6" fill="#c8c8c8"/><path d="M137 1073h3M142 1073h3" stroke="#c8c8c8" stroke-width="1.2"/>
<path d="M153.7 1067v5.5M177.7 1067v5.5M201.7 1067v5.5M225.7 1067v5.5M249.7 1067v5.5M273.7 1067v5.5M297.7 1067v5.5M321.7 1067v5.5M345.7 1067v5.5M369.7 1067v5.5M393.7 1067v5.5M417.7 1067v5.5M441.7 1067v5.5M465.7 1067v5.5M489.7 1067v5.5M513.7 1067v5.5M537.7 1067v5.5M561.7 1067v5.5M585.7 1067v5.5M609.7 1067v5.5M633.7 1067v5.5M657.7 1067v5.5M681.7 1067v5.5M705.7 1067v5.5M729.7 1067v5.5M753.7 1067v5.5M777.7 1067v5.5M801.7 1067v5.5M825.7 1067v5.5M849.7 1067v5.5M873.7 1067v5.5M897.7 1067v5.5M921.7 1067v5.5M945.7 1067v5.5M969.7 1067v5.5M993.7 1067v5.5M1017.7 1067v5.5M1041.7 1067v5.5M1065.7 1067v5.5M1089.7 1067v5.5M1113.7 1067v5.5M1137.7 1067v5.5M1161.7 1067v5.5M1185.7 1067v5.5M1209.7 1067v5.5M1233.7 1067v5.5M1257.7 1067v5.5M1281.7 1067v5.5M1305.7 1067v5.5M1329.7 1067v5.5M1353.7 1067v5.5M1377.7 1067v5.5M1401.7 1067v5.5M1425.7 1067v5.5M1449.7 1067v5.5M1473.7 1067v5.5M1497.7 1067v5.5M1521.7 1067v5.5M1545.7 1067v5.5M1569.7 1067v5.5M1593.7 1067v5.5M1617.7 1067v5.5M1641.7 1067v5.5M1665.7 1067v5.5M1689.7 1067v5.5M1713.7 1067v5.5M1737.7 1067v5.5M1761.7 1067v5.5M1785.7 1067v5.5M1809.7 1067v5.5M1833.7 1067v5.5M1857.7 1067v5.5" stroke="#c8c8c8" stroke-width="1.5"/>
<g transform="translate(145.7 1048)"><path d="M2 2h12v12h-12z" fill="none" stroke="#666" stroke-width=".9" stroke-dasharray="7 2"/><rect x="1" y="1" width="2" height="2" fill="#3a8fd4"/><rect x="13" y="1" width="2" height="2" fill="#3a8fd4"/><rect x="1" y="13" width="2" height="2" fill="#3a8fd4"/><path d="M9.5 15l5-5 1.5 1.5-5 5z" fill="#f0c070"/><path d="M14.5 10l1-1 1.5 1.5-1 1z" fill="#e05050"/></g>
<g transform="translate(169.7 1048)"><path d="M1 4l2.5-3.5h9l-2.5 3.5z" fill="#8cc8f4"/><rect x="1" y="4" width="9" height="10" fill="#5fb0ea"/><path d="M10 4l2.5-3.5v10l-2.5 3.5z" fill="#3a8fd4"/><path d="M1 14h9l2.5-3.5v1.8l-2.5 3.5h-9z" fill="#a9cdea"/><path d="M14.5 4v10.5" stroke="#333" stroke-width="1"/><path d="M14.5 1.5l1.5 3h-3z" fill="#333"/></g>
<g transform="translate(193.7 1048)"><path d="M1 8.5l6.5-7h4.5q4 0 4 4v10.5h-15z" fill="#dcdcdc" stroke="#777" stroke-width=".9" stroke-linejoin="round"/><path d="M1.8 8l6-6.3 3.7 2.3-6.2 6.5z" fill="#5fb0ea"/></g>
<g transform="translate(217.7 1048)"><path d="M1 4l2.5-3.5h9l-2.5 3.5z" fill="#8cc8f4"/><rect x="1" y="4" width="9" height="10" fill="#5fb0ea"/><path d="M10 4l2.5-3.5v10l-2.5 3.5z" fill="#3a8fd4"/><path d="M1 14h9l2.5-3.5v1.8l-2.5 3.5h-9z" fill="#a9cdea"/><path d="M14.5 4v10.5" stroke="#333" stroke-width="1"/><path d="M14.5 1.5l1.5 3h-3z" fill="#333"/></g>
<g transform="translate(241.7 1048)"><path d="M1 4l2.5-3.5h9l-2.5 3.5z" fill="#8cc8f4"/><rect x="1" y="4" width="9" height="10" fill="#5fb0ea"/><path d="M10 4l2.5-3.5v10l-2.5 3.5z" fill="#3a8fd4"/><path d="M1 14h9l2.5-3.5v1.8l-2.5 3.5h-9z" fill="#a9cdea"/><path d="M14.5 4v10.5" stroke="#333" stroke-width="1"/><path d="M14.5 1.5l1.5 3h-3z" fill="#333"/></g>
<g transform="translate(265.7 1048)"><path d="M1 4l2.5-3.5h9l-2.5 3.5z" fill="#8cc8f4"/><rect x="1" y="4" width="9" height="10" fill="#5fb0ea"/><path d="M10 4l2.5-3.5v10l-2.5 3.5z" fill="#3a8fd4"/><path d="M1 14h9l2.5-3.5v1.8l-2.5 3.5h-9z" fill="#a9cdea"/><path d="M14.5 4v10.5" stroke="#333" stroke-width="1"/><path d="M14.5 1.5l1.5 3h-3z" fill="#333"/></g>
<g transform="translate(289.7 1048)"><path d="M1 8.5l6.5-7h4.5q4 0 4 4v10.5h-15z" fill="#dcdcdc" stroke="#777" stroke-width=".9" stroke-linejoin="round"/><path d="M1.8 8l6-6.3 3.7 2.3-6.2 6.5z" fill="#5fb0ea"/></g>
<g transform="translate(313.7 1048)"><path d="M1 4l2.5-3.5h9l-2.5 3.5z" fill="#8cc8f4"/><rect x="1" y="4" width="9" height="10" fill="#5fb0ea"/><path d="M10 4l2.5-3.5v10l-2.5 3.5z" fill="#3a8fd4"/><path d="M1 14h9l2.5-3.5v1.8l-2.5 3.5h-9z" fill="#a9cdea"/><path d="M14.5 4v10.5" stroke="#333" stroke-width="1"/><path d="M14.5 1.5l1.5 3h-3z" fill="#333"/></g>
<g transform="translate(337.7 1048)"><path d="M1 4l2.5-3.5h9l-2.5 3.5z" fill="#8cc8f4"/><rect x="1" y="4" width="9" height="10" fill="#5fb0ea"/><path d="M10 4l2.5-3.5v10l-2.5 3.5z" fill="#3a8fd4"/><path d="M1 14h9l2.5-3.5v1.8l-2.5 3.5h-9z" fill="#a9cdea"/><path d="M14.5 4v10.5" stroke="#333" stroke-width="1"/><path d="M14.5 1.5l1.5 3h-3z" fill="#333"/></g>
<g transform="translate(361.7 1048)"><path d="M1 5l3-3.5h5q6 1 7 7v7h-15z" fill="#dcdcdc" stroke="#777" stroke-width=".9"/><path d="M8 2q6 1 7.5 7" fill="none" stroke="#5fb0ea" stroke-width="2.2"/></g>
<g transform="translate(385.7 1048)"><path d="M1 4l2.5-3.5h9l-2.5 3.5z" fill="#8cc8f4"/><rect x="1" y="4" width="9" height="10" fill="#5fb0ea"/><path d="M10 4l2.5-3.5v10l-2.5 3.5z" fill="#3a8fd4"/><path d="M1 14h9l2.5-3.5v1.8l-2.5 3.5h-9z" fill="#a9cdea"/><path d="M14.5 4v10.5" stroke="#333" stroke-width="1"/><path d="M14.5 1.5l1.5 3h-3z" fill="#333"/></g>
<g transform="translate(409.7 1048)"><path d="M1 4l2.5-3.5h9l-2.5 3.5z" fill="#8cc8f4"/><rect x="1" y="4" width="9" height="10" fill="#5fb0ea"/><path d="M10 4l2.5-3.5v10l-2.5 3.5z" fill="#3a8fd4"/><path d="M1 14h9l2.5-3.5v1.8l-2.5 3.5h-9z" fill="#a9cdea"/><path d="M14.5 4v10.5" stroke="#333" stroke-width="1"/><path d="M14.5 1.5l1.5 3h-3z" fill="#333"/></g>
<g transform="translate(433.7 1048)"><path d="M1 4l2.5-3.5h9l-2.5 3.5z" fill="#8cc8f4"/><rect x="1" y="4" width="9" height="10" fill="#5fb0ea"/><path d="M10 4l2.5-3.5v10l-2.5 3.5z" fill="#3a8fd4"/><path d="M1 14h9l2.5-3.5v1.8l-2.5 3.5h-9z" fill="#a9cdea"/><path d="M14.5 4v10.5" stroke="#333" stroke-width="1"/><path d="M14.5 1.5l1.5 3h-3z" fill="#333"/></g>
<g transform="translate(457.7 1048)"><path d="M1 4l2.5-3.5h9l-2.5 3.5z" fill="#8cc8f4"/><rect x="1" y="4" width="9" height="10" fill="#5fb0ea"/><path d="M10 4l2.5-3.5v10l-2.5 3.5z" fill="#3a8fd4"/><path d="M1 14h9l2.5-3.5v1.8l-2.5 3.5h-9z" fill="#a9cdea"/><path d="M14.5 4v10.5" stroke="#333" stroke-width="1"/><path d="M14.5 1.5l1.5 3h-3z" fill="#333"/></g>
<g transform="translate(481.7 1048)"><path d="M1 4l2.5-3.5h9l-2.5 3.5z" fill="#8cc8f4"/><rect x="1" y="4" width="9" height="10" fill="#5fb0ea"/><path d="M10 4l2.5-3.5v10l-2.5 3.5z" fill="#3a8fd4"/><path d="M1 14h9l2.5-3.5v1.8l-2.5 3.5h-9z" fill="#a9cdea"/><path d="M14.5 4v10.5" stroke="#333" stroke-width="1"/><path d="M14.5 1.5l1.5 3h-3z" fill="#333"/></g>
<g transform="translate(505.7 1048)"><path d="M5 1.5h10v10" fill="none" stroke="#888" stroke-width="1"/><path d="M3 3.5h10v10" fill="none" stroke="#888" stroke-width="1"/><rect x="1" y="5.5" width="10" height="10" fill="#f4f4f4" stroke="#555" stroke-width="1.1"/><rect x="3.5" y="8" width="5" height="5" fill="none" stroke="#555" stroke-width=".9"/></g>
<g transform="translate(529.7 1048)"><path d="M5 1.5h10v10" fill="none" stroke="#888" stroke-width="1"/><path d="M3 3.5h10v10" fill="none" stroke="#888" stroke-width="1"/><rect x="1" y="5.5" width="10" height="10" fill="#f4f4f4" stroke="#555" stroke-width="1.1"/><rect x="3.5" y="8" width="5" height="5" fill="none" stroke="#555" stroke-width=".9"/></g>
<g transform="translate(553.7 1048)"><path d="M2 2h12v12h-12z" fill="none" stroke="#666" stroke-width=".9" stroke-dasharray="7 2"/><rect x="1" y="1" width="2" height="2" fill="#3a8fd4"/><rect x="13" y="1" width="2" height="2" fill="#3a8fd4"/><rect x="1" y="13" width="2" height="2" fill="#3a8fd4"/><path d="M9.5 15l5-5 1.5 1.5-5 5z" fill="#f0c070"/><path d="M14.5 10l1-1 1.5 1.5-1 1z" fill="#e05050"/></g>
<g transform="translate(577.7 1048)"><path d="M1 4l2.5-3.5h9l-2.5 3.5z" fill="#8cc8f4"/><rect x="1" y="4" width="9" height="10" fill="#5fb0ea"/><path d="M10 4l2.5-3.5v10l-2.5 3.5z" fill="#3a8fd4"/><path d="M1 14h9l2.5-3.5v1.8l-2.5 3.5h-9z" fill="#a9cdea"/><path d="M14.5 4v10.5" stroke="#333" stroke-width="1"/><path d="M14.5 1.5l1.5 3h-3z" fill="#333"/></g>
<g transform="translate(601.7 1048)"><path d="M2 2h12v12h-12z" fill="none" stroke="#666" stroke-width=".9" stroke-dasharray="7 2"/><rect x="1" y="1" width="2" height="2" fill="#3a8fd4"/><rect x="13" y="1" width="2" height="2" fill="#3a8fd4"/><rect x="1" y="13" width="2" height="2" fill="#3a8fd4"/><path d="M9.5 15l5-5 1.5 1.5-5 5z" fill="#f0c070"/><path d="M14.5 10l1-1 1.5 1.5-1 1z" fill="#e05050"/></g>
<g transform="translate(625.7 1048)"><path d="M1 4l2.5-3.5h9l-2.5 3.5z" fill="#8cc8f4"/><rect x="1" y="4" width="9" height="10" fill="#5fb0ea"/><path d="M10 4l2.5-3.5v10l-2.5 3.5z" fill="#3a8fd4"/><path d="M1 14h9l2.5-3.5v1.8l-2.5 3.5h-9z" fill="#a9cdea"/><path d="M14.5 4v10.5" stroke="#333" stroke-width="1"/><path d="M14.5 1.5l1.5 3h-3z" fill="#333"/></g>
<g transform="translate(649.7 1048)"><path d="M2 2h12v12h-12z" fill="none" stroke="#666" stroke-width=".9" stroke-dasharray="7 2"/><rect x="1" y="1" width="2" height="2" fill="#3a8fd4"/><rect x="13" y="1" width="2" height="2" fill="#3a8fd4"/><rect x="1" y="13" width="2" height="2" fill="#3a8fd4"/><path d="M9.5 15l5-5 1.5 1.5-5 5z" fill="#f0c070"/><path d="M14.5 10l1-1 1.5 1.5-1 1z" fill="#e05050"/></g>
<g transform="translate(673.7 1048)"><path d="M1 4l2.5-3.5h9l-2.5 3.5z" fill="#8cc8f4"/><rect x="1" y="4" width="9" height="10" fill="#5fb0ea"/><path d="M10 4l2.5-3.5v10l-2.5 3.5z" fill="#3a8fd4"/><path d="M1 14h9l2.5-3.5v1.8l-2.5 3.5h-9z" fill="#a9cdea"/><path d="M14.5 4v10.5" stroke="#333" stroke-width="1"/><path d="M14.5 1.5l1.5 3h-3z" fill="#333"/></g>
<g transform="translate(697.7 1048)"><path d="M2 2h12v12h-12z" fill="none" stroke="#666" stroke-width=".9" stroke-dasharray="7 2"/><rect x="1" y="1" width="2" height="2" fill="#3a8fd4"/><rect x="13" y="1" width="2" height="2" fill="#3a8fd4"/><rect x="1" y="13" width="2" height="2" fill="#3a8fd4"/><path d="M9.5 15l5-5 1.5 1.5-5 5z" fill="#f0c070"/><path d="M14.5 10l1-1 1.5 1.5-1 1z" fill="#e05050"/></g>
<g transform="translate(721.7 1048)"><path d="M1 4l2.5-3.5h9l-2.5 3.5z" fill="#8cc8f4"/><rect x="1" y="4" width="9" height="10" fill="#5fb0ea"/><path d="M10 4l2.5-3.5v10l-2.5 3.5z" fill="#3a8fd4"/><path d="M1 14h9l2.5-3.5v1.8l-2.5 3.5h-9z" fill="#a9cdea"/><path d="M14.5 4v10.5" stroke="#333" stroke-width="1"/><path d="M14.5 1.5l1.5 3h-3z" fill="#333"/></g>
<g transform="translate(745.7 1048)"><path d="M1 4l2.5-3.5h9l-2.5 3.5z" fill="#8cc8f4"/><rect x="1" y="4" width="9" height="10" fill="#5fb0ea"/><path d="M10 4l2.5-3.5v10l-2.5 3.5z" fill="#3a8fd4"/><path d="M1 14h9l2.5-3.5v1.8l-2.5 3.5h-9z" fill="#a9cdea"/><path d="M14.5 4v10.5" stroke="#333" stroke-width="1"/><path d="M14.5 1.5l1.5 3h-3z" fill="#333"/></g>
<g transform="translate(769.7 1048)"><path d="M2 2h12v12h-12z" fill="none" stroke="#666" stroke-width=".9" stroke-dasharray="7 2"/><rect x="1" y="1" width="2" height="2" fill="#3a8fd4"/><rect x="13" y="1" width="2" height="2" fill="#3a8fd4"/><rect x="1" y="13" width="2" height="2" fill="#3a8fd4"/><path d="M9.5 15l5-5 1.5 1.5-5 5z" fill="#f0c070"/><path d="M14.5 10l1-1 1.5 1.5-1 1z" fill="#e05050"/></g>
<g transform="translate(793.7 1048)"><path d="M1 6l3-3v11l-3 2z" fill="#ddd" stroke="#888" stroke-width=".7"/><path d="M5 4l4-3v12l-4 3z" fill="#4fbf72"/><path d="M11 5l5-3.5v11l-5 4z" fill="#e8935a"/></g>
<g transform="translate(817.7 1048)"><path d="M1 4l2.5-3.5h9l-2.5 3.5z" fill="#8cc8f4"/><rect x="1" y="4" width="9" height="10" fill="#5fb0ea"/><path d="M10 4l2.5-3.5v10l-2.5 3.5z" fill="#3a8fd4"/><path d="M1 14h9l2.5-3.5v1.8l-2.5 3.5h-9z" fill="#a9cdea"/><path d="M14.5 4v10.5" stroke="#333" stroke-width="1"/><path d="M14.5 1.5l1.5 3h-3z" fill="#333"/></g>
<g transform="translate(841.7 1048)"><path d="M1 4l2.5-3.5h9l-2.5 3.5z" fill="#8cc8f4"/><rect x="1" y="4" width="9" height="10" fill="#5fb0ea"/><path d="M10 4l2.5-3.5v10l-2.5 3.5z" fill="#3a8fd4"/><path d="M1 14h9l2.5-3.5v1.8l-2.5 3.5h-9z" fill="#a9cdea"/><path d="M14.5 4v10.5" stroke="#333" stroke-width="1"/><path d="M14.5 1.5l1.5 3h-3z" fill="#333"/></g>
<g transform="translate(865.7 1048)"><path d="M1 4l2.5-3.5h9l-2.5 3.5z" fill="#8cc8f4"/><rect x="1" y="4" width="9" height="10" fill="#5fb0ea"/><path d="M10 4l2.5-3.5v10l-2.5 3.5z" fill="#3a8fd4"/><path d="M1 14h9l2.5-3.5v1.8l-2.5 3.5h-9z" fill="#a9cdea"/><path d="M14.5 4v10.5" stroke="#333" stroke-width="1"/><path d="M14.5 1.5l1.5 3h-3z" fill="#333"/></g>
<g transform="translate(889.7 1048)"><path d="M1 4l2.5-3.5h9l-2.5 3.5z" fill="#8cc8f4"/><rect x="1" y="4" width="9" height="10" fill="#5fb0ea"/><path d="M10 4l2.5-3.5v10l-2.5 3.5z" fill="#3a8fd4"/><path d="M1 14h9l2.5-3.5v1.8l-2.5 3.5h-9z" fill="#a9cdea"/><path d="M14.5 4v10.5" stroke="#333" stroke-width="1"/><path d="M14.5 1.5l1.5 3h-3z" fill="#333"/></g>
<g transform="translate(913.7 1048)" opacity="0.28"><path d="M1 4l2.5-3.5h9l-2.5 3.5z" fill="#8cc8f4"/><rect x="1" y="4" width="9" height="10" fill="#5fb0ea"/><path d="M10 4l2.5-3.5v10l-2.5 3.5z" fill="#3a8fd4"/><path d="M1 14h9l2.5-3.5v1.8l-2.5 3.5h-9z" fill="#a9cdea"/><path d="M14.5 4v10.5" stroke="#333" stroke-width="1"/><path d="M14.5 1.5l1.5 3h-3z" fill="#333"/></g>
<g transform="translate(937.7 1048)" opacity="0.28"><path d="M1 4l2.5-3.5h9l-2.5 3.5z" fill="#8cc8f4"/><rect x="1" y="4" width="9" height="10" fill="#5fb0ea"/><path d="M10 4l2.5-3.5v10l-2.5 3.5z" fill="#3a8fd4"/><path d="M1 14h9l2.5-3.5v1.8l-2.5 3.5h-9z" fill="#a9cdea"/><path d="M14.5 4v10.5" stroke="#333" stroke-width="1"/><path d="M14.5 1.5l1.5 3h-3z" fill="#333"/></g>
<g transform="translate(961.7 1048)" opacity="0.28"><path d="M1 4l2.5-3.5h9l-2.5 3.5z" fill="#8cc8f4"/><rect x="1" y="4" width="9" height="10" fill="#5fb0ea"/><path d="M10 4l2.5-3.5v10l-2.5 3.5z" fill="#3a8fd4"/><path d="M1 14h9l2.5-3.5v1.8l-2.5 3.5h-9z" fill="#a9cdea"/><path d="M14.5 4v10.5" stroke="#333" stroke-width="1"/><path d="M14.5 1.5l1.5 3h-3z" fill="#333"/></g>
<g transform="translate(985.7 1048)"><path d="M1 6q0-3 3-4h7q4 1 4 5v5q-1 4-5 4h-5q-4-1-4-4z" fill="#c9a232"/><path d="M3 8h9M3 11h9" stroke="#a07c18" stroke-width=".9"/><path d="M12 0l1 2.5 2.5-.5-1.2 2.2 2.2 1.3-2.5.6.2 2.5-2.2-1.4-2 1.6v-2.6l-2.5-.6 2.2-1.3-1-2.3 2.5.5z" fill="#f5b63c"/></g>
<g transform="translate(1009.7 1048)"><rect x="0" y="0" width="16" height="16" fill="#cfa93e"/><rect x="0.8" y="7.5" width="7.5" height="7.5" fill="#f4f4f4" stroke="#555" stroke-width="1"/></g>
<g transform="translate(1033.7 1048)"><path d="M8 2.5v11M2.5 8h11" stroke="#222" stroke-width="1.2"/><path d="M8 0l2.5 3.5h-5zM8 16l2.5-3.5h-5zM0 8l3.5-2.5v5zM16 8l-3.5-2.5v5z" fill="#222"/></g>
<g transform="translate(1057.7 1048)"><path d="M2 6l2-3h6l2 3v3h-10z" fill="#cfe2f4" stroke="#3f78b8" stroke-width=".9"/><rect x="4" y="4.5" width="4" height="3" fill="#7fb2e4"/><path d="M1 15l5-5h5v5z" fill="#c8c8c8" stroke="#3f78b8" stroke-width=".9"/><path d="M12 8.5v4h-2.5l4 4 4-4h-2.5v-4z" fill="#2f7fd0"/></g>
<g transform="translate(1081.7 1048)"><path d="M1 6q0-3.5 3.5-4.5 2 0 2 2v12h-2v-3h-2v3h-1.5z" fill="#c8c8c8" stroke="#777" stroke-width=".9"/><path d="M9 4l3-2.5q3 0 3.5 3v11.5l-2.5-1.5v-3l-2-1v4l-2-1z" fill="#c8c8c8" stroke="#777" stroke-width=".9"/><path d="M10 5.5l2.5-1v5l-2.5.5z" fill="#bcd8f0"/></g>
<g transform="translate(1105.7 1048)"><path d="M2 6l2-3h6l2 3v3h-10z" fill="#cfe2f4" stroke="#3f78b8" stroke-width=".9"/><rect x="4" y="4.5" width="4" height="3" fill="#7fb2e4"/><path d="M1 15l5-5h5v5z" fill="#c8c8c8" stroke="#3f78b8" stroke-width=".9"/><path d="M12 8.5v4h-2.5l4 4 4-4h-2.5v-4z" fill="#2f7fd0"/></g>
<g transform="translate(1129.7 1048)"><path d="M2 6l2-3h6l2 3v3h-10z" fill="#cfe2f4" stroke="#3f78b8" stroke-width=".9"/><rect x="4" y="4.5" width="4" height="3" fill="#7fb2e4"/><path d="M1 15l5-5h5v5z" fill="#c8c8c8" stroke="#3f78b8" stroke-width=".9"/><path d="M12 8.5v4h-2.5l4 4 4-4h-2.5v-4z" fill="#2f7fd0"/></g>
<g transform="translate(1153.7 1048)"><path d="M1 6q0-3.5 3.5-4.5 2 0 2 2v12h-2v-3h-2v3h-1.5z" fill="#c8c8c8" stroke="#777" stroke-width=".9"/><path d="M9 4l3-2.5q3 0 3.5 3v11.5l-2.5-1.5v-3l-2-1v4l-2-1z" fill="#c8c8c8" stroke="#777" stroke-width=".9"/><path d="M10 5.5l2.5-1v5l-2.5.5z" fill="#bcd8f0"/></g>
<g transform="translate(1177.7 1048)"><path d="M2 6l2-3h6l2 3v3h-10z" fill="#cfe2f4" stroke="#3f78b8" stroke-width=".9"/><rect x="4" y="4.5" width="4" height="3" fill="#7fb2e4"/><path d="M1 15l5-5h5v5z" fill="#c8c8c8" stroke="#3f78b8" stroke-width=".9"/><path d="M12 8.5v4h-2.5l4 4 4-4h-2.5v-4z" fill="#2f7fd0"/></g>
<g transform="translate(1201.7 1048)"><path d="M1 6q0-3.5 3.5-4.5 2 0 2 2v12h-2v-3h-2v3h-1.5z" fill="#c8c8c8" stroke="#777" stroke-width=".9"/><path d="M9 4l3-2.5q3 0 3.5 3v11.5l-2.5-1.5v-3l-2-1v4l-2-1z" fill="#c8c8c8" stroke="#777" stroke-width=".9"/><path d="M10 5.5l2.5-1v5l-2.5.5z" fill="#bcd8f0"/></g>
<g transform="translate(1225.7 1048)"><rect x=".5" y="1.5" width="15" height="13" rx="2" fill="#d4d4d4" stroke="#888" stroke-width=".9"/><g transform="rotate(-35 8 8)" fill="none" stroke="#777" stroke-width="1.6"><rect x="2" y="5.5" width="7" height="5" rx="2.5"/><rect x="7" y="5.5" width="7" height="5" rx="2.5"/></g></g>
<g transform="translate(1249.7 1048)"><path d="M1 6q0-3.5 3.5-4.5 2 0 2 2v12h-2v-3h-2v3h-1.5z" fill="#c8c8c8" stroke="#777" stroke-width=".9"/><path d="M9 4l3-2.5q3 0 3.5 3v11.5l-2.5-1.5v-3l-2-1v4l-2-1z" fill="#c8c8c8" stroke="#777" stroke-width=".9"/><path d="M10 5.5l2.5-1v5l-2.5.5z" fill="#bcd8f0"/></g>
<g transform="translate(1273.7 1048)"><path d="M2 2h12v12h-12z" fill="none" stroke="#666" stroke-width=".9" stroke-dasharray="7 2"/><rect x="1" y="1" width="2" height="2" fill="#3a8fd4"/><rect x="13" y="1" width="2" height="2" fill="#3a8fd4"/><rect x="1" y="13" width="2" height="2" fill="#3a8fd4"/><path d="M9.5 15l5-5 1.5 1.5-5 5z" fill="#f0c070"/><path d="M14.5 10l1-1 1.5 1.5-1 1z" fill="#e05050"/></g>
<g transform="translate(1297.7 1048)"><path d="M1 4l2.5-3.5h9l-2.5 3.5z" fill="#8cc8f4"/><rect x="1" y="4" width="9" height="10" fill="#5fb0ea"/><path d="M10 4l2.5-3.5v10l-2.5 3.5z" fill="#3a8fd4"/><path d="M1 14h9l2.5-3.5v1.8l-2.5 3.5h-9z" fill="#a9cdea"/><path d="M14.5 4v10.5" stroke="#333" stroke-width="1"/><path d="M14.5 1.5l1.5 3h-3z" fill="#333"/></g>
<g transform="translate(1321.7 1048)"><path d="M1 4l2.5-3.5h9l-2.5 3.5z" fill="#8cc8f4"/><rect x="1" y="4" width="9" height="10" fill="#5fb0ea"/><path d="M10 4l2.5-3.5v10l-2.5 3.5z" fill="#3a8fd4"/><path d="M1 14h9l2.5-3.5v1.8l-2.5 3.5h-9z" fill="#a9cdea"/><path d="M14.5 4v10.5" stroke="#333" stroke-width="1"/><path d="M14.5 1.5l1.5 3h-3z" fill="#333"/></g>
<g transform="translate(1345.7 1048)"><path d="M2 2h12v12h-12z" fill="none" stroke="#666" stroke-width=".9" stroke-dasharray="7 2"/><rect x="1" y="1" width="2" height="2" fill="#3a8fd4"/><rect x="13" y="1" width="2" height="2" fill="#3a8fd4"/><rect x="1" y="13" width="2" height="2" fill="#3a8fd4"/><path d="M9.5 15l5-5 1.5 1.5-5 5z" fill="#f0c070"/><path d="M14.5 10l1-1 1.5 1.5-1 1z" fill="#e05050"/></g>
<g transform="translate(1369.7 1048)"><path d="M1 4l2.5-3.5h9l-2.5 3.5z" fill="#8cc8f4"/><rect x="1" y="4" width="9" height="10" fill="#5fb0ea"/><path d="M10 4l2.5-3.5v10l-2.5 3.5z" fill="#3a8fd4"/><path d="M1 14h9l2.5-3.5v1.8l-2.5 3.5h-9z" fill="#a9cdea"/><path d="M14.5 4v10.5" stroke="#333" stroke-width="1"/><path d="M14.5 1.5l1.5 3h-3z" fill="#333"/></g>
<g transform="translate(1393.7 1048)"><path d="M2 2h12v12h-12z" fill="none" stroke="#666" stroke-width=".9" stroke-dasharray="7 2"/><rect x="1" y="1" width="2" height="2" fill="#3a8fd4"/><rect x="13" y="1" width="2" height="2" fill="#3a8fd4"/><rect x="1" y="13" width="2" height="2" fill="#3a8fd4"/><path d="M9.5 15l5-5 1.5 1.5-5 5z" fill="#f0c070"/><path d="M14.5 10l1-1 1.5 1.5-1 1z" fill="#e05050"/></g>
<g transform="translate(1417.7 1048)"><path d="M0 7q8-6 16 0l-3 3q-5-3-10 0z" fill="#8cc8f4"/><path d="M0 7l3 3v4l-3-3z" fill="#3a8fd4"/><path d="M3 10q5-3 10 0v4q-5-3-10 0z" fill="#5fb0ea"/><path d="M13 10l3-3v4l-3 3z" fill="#f4f4f4" stroke="#666" stroke-width=".7"/><path d="M2 3.5q6-4 12 0" fill="none" stroke="#444" stroke-width=".9"/></g>
<g transform="translate(1441.7 1048)"><path d="M0 11l3-3h4v7h-7z" fill="#ddd" stroke="#999" stroke-width=".6"/><path d="M2 7l7-7 7 7-7 7z" fill="#e8935a"/><path d="M5 6l7 1-2.5 6z" fill="#f5e9df" fill-opacity=".6"/></g>
<g transform="translate(1465.7 1048)"><path d="M2 2h12v12h-12z" fill="none" stroke="#666" stroke-width=".9" stroke-dasharray="7 2"/><rect x="1" y="1" width="2" height="2" fill="#3a8fd4"/><rect x="13" y="1" width="2" height="2" fill="#3a8fd4"/><rect x="1" y="13" width="2" height="2" fill="#3a8fd4"/><path d="M9.5 15l5-5 1.5 1.5-5 5z" fill="#f0c070"/><path d="M14.5 10l1-1 1.5 1.5-1 1z" fill="#e05050"/></g>
<g transform="translate(1489.7 1048)"><path d="M1 4l2.5-3.5h9l-2.5 3.5z" fill="#8cc8f4"/><rect x="1" y="4" width="9" height="10" fill="#5fb0ea"/><path d="M10 4l2.5-3.5v10l-2.5 3.5z" fill="#3a8fd4"/><path d="M1 14h9l2.5-3.5v1.8l-2.5 3.5h-9z" fill="#a9cdea"/><path d="M14.5 4v10.5" stroke="#333" stroke-width="1"/><path d="M14.5 1.5l1.5 3h-3z" fill="#333"/></g>
<g transform="translate(1513.7 1048)"><path d="M1 8.5l6.5-7h4.5q4 0 4 4v10.5h-15z" fill="#dcdcdc" stroke="#777" stroke-width=".9" stroke-linejoin="round"/><path d="M1.8 8l6-6.3 3.7 2.3-6.2 6.5z" fill="#5fb0ea"/></g>
<g transform="translate(1537.7 1048)"><path d="M1 8.5l6.5-7h4.5q4 0 4 4v10.5h-15z" fill="#dcdcdc" stroke="#777" stroke-width=".9" stroke-linejoin="round"/><path d="M1.8 8l6-6.3 3.7 2.3-6.2 6.5z" fill="#5fb0ea"/></g>
<g transform="translate(1561.7 1048)"><path d="M1 4l2.5-3.5h9l-2.5 3.5z" fill="#8cc8f4"/><rect x="1" y="4" width="9" height="10" fill="#5fb0ea"/><path d="M10 4l2.5-3.5v10l-2.5 3.5z" fill="#3a8fd4"/><path d="M1 14h9l2.5-3.5v1.8l-2.5 3.5h-9z" fill="#a9cdea"/><path d="M14.5 4v10.5" stroke="#333" stroke-width="1"/><path d="M14.5 1.5l1.5 3h-3z" fill="#333"/></g>
<g transform="translate(1585.7 1048)"><path d="M2 2h12v12h-12z" fill="none" stroke="#666" stroke-width=".9" stroke-dasharray="7 2"/><rect x="1" y="1" width="2" height="2" fill="#3a8fd4"/><rect x="13" y="1" width="2" height="2" fill="#3a8fd4"/><rect x="1" y="13" width="2" height="2" fill="#3a8fd4"/><path d="M9.5 15l5-5 1.5 1.5-5 5z" fill="#f0c070"/><path d="M14.5 10l1-1 1.5 1.5-1 1z" fill="#e05050"/></g>
<g transform="translate(1609.7 1048)"><path d="M1 4l2.5-3.5h9l-2.5 3.5z" fill="#8cc8f4"/><rect x="1" y="4" width="9" height="10" fill="#5fb0ea"/><path d="M10 4l2.5-3.5v10l-2.5 3.5z" fill="#3a8fd4"/><path d="M1 14h9l2.5-3.5v1.8l-2.5 3.5h-9z" fill="#a9cdea"/><path d="M14.5 4v10.5" stroke="#333" stroke-width="1"/><path d="M14.5 1.5l1.5 3h-3z" fill="#333"/></g>
<g transform="translate(1633.7 1048)"><path d="M5 1.5h10v10" fill="none" stroke="#888" stroke-width="1"/><path d="M3 3.5h10v10" fill="none" stroke="#888" stroke-width="1"/><rect x="1" y="5.5" width="10" height="10" fill="#f4f4f4" stroke="#555" stroke-width="1.1"/><rect x="3.5" y="8" width="5" height="5" fill="none" stroke="#555" stroke-width=".9"/></g>
<g transform="translate(1657.7 1048)"><path d="M1 8.5l6.5-7h4.5q4 0 4 4v10.5h-15z" fill="#dcdcdc" stroke="#777" stroke-width=".9" stroke-linejoin="round"/><path d="M1.8 8l6-6.3 3.7 2.3-6.2 6.5z" fill="#5fb0ea"/></g>
<g transform="translate(1681.7 1048)"><path d="M1 8.5l6.5-7h4.5q4 0 4 4v10.5h-15z" fill="#dcdcdc" stroke="#777" stroke-width=".9" stroke-linejoin="round"/><path d="M1.8 8l6-6.3 3.7 2.3-6.2 6.5z" fill="#5fb0ea"/></g>
<g transform="translate(1705.7 1048)"><path d="M2 2h12v12h-12z" fill="none" stroke="#666" stroke-width=".9" stroke-dasharray="7 2"/><rect x="1" y="1" width="2" height="2" fill="#3a8fd4"/><rect x="13" y="1" width="2" height="2" fill="#3a8fd4"/><rect x="1" y="13" width="2" height="2" fill="#3a8fd4"/><path d="M9.5 15l5-5 1.5 1.5-5 5z" fill="#f0c070"/><path d="M14.5 10l1-1 1.5 1.5-1 1z" fill="#e05050"/></g>
<g transform="translate(1729.7 1048)"><path d="M1 4l2.5-3.5h9l-2.5 3.5z" fill="#8cc8f4"/><rect x="1" y="4" width="9" height="10" fill="#5fb0ea"/><path d="M10 4l2.5-3.5v10l-2.5 3.5z" fill="#3a8fd4"/><path d="M1 14h9l2.5-3.5v1.8l-2.5 3.5h-9z" fill="#a9cdea"/><path d="M14.5 4v10.5" stroke="#333" stroke-width="1"/><path d="M14.5 1.5l1.5 3h-3z" fill="#333"/></g>
<g transform="translate(1753.7 1048)"><path d="M1 4l2.5-3.5h9l-2.5 3.5z" fill="#8cc8f4"/><rect x="1" y="4" width="9" height="10" fill="#5fb0ea"/><path d="M10 4l2.5-3.5v10l-2.5 3.5z" fill="#3a8fd4"/><path d="M1 14h9l2.5-3.5v1.8l-2.5 3.5h-9z" fill="#a9cdea"/><path d="M14.5 4v10.5" stroke="#333" stroke-width="1"/><path d="M14.5 1.5l1.5 3h-3z" fill="#333"/></g>
<g transform="translate(1777.7 1048)"><path d="M2 2h12v12h-12z" fill="none" stroke="#666" stroke-width=".9" stroke-dasharray="7 2"/><rect x="1" y="1" width="2" height="2" fill="#3a8fd4"/><rect x="13" y="1" width="2" height="2" fill="#3a8fd4"/><rect x="1" y="13" width="2" height="2" fill="#3a8fd4"/><path d="M9.5 15l5-5 1.5 1.5-5 5z" fill="#f0c070"/><path d="M14.5 10l1-1 1.5 1.5-1 1z" fill="#e05050"/></g>
<g transform="translate(1801.7 1048)"><path d="M1 4l2.5-3.5h9l-2.5 3.5z" fill="#8cc8f4"/><rect x="1" y="4" width="9" height="10" fill="#5fb0ea"/><path d="M10 4l2.5-3.5v10l-2.5 3.5z" fill="#3a8fd4"/><path d="M1 14h9l2.5-3.5v1.8l-2.5 3.5h-9z" fill="#a9cdea"/><path d="M14.5 4v10.5" stroke="#333" stroke-width="1"/><path d="M14.5 1.5l1.5 3h-3z" fill="#333"/></g>
<g transform="translate(1825.7 1048)"><path d="M1 5l3-3.5h5q6 1 7 7v7h-15z" fill="#dcdcdc" stroke="#777" stroke-width=".9"/><path d="M8 2q6 1 7.5 7" fill="none" stroke="#5fb0ea" stroke-width="2.2"/></g>
<g transform="translate(1849.7 1048)" opacity="0.3"><path d="M2 2h12v12h-12z" fill="none" stroke="#666" stroke-width=".9" stroke-dasharray="7 2"/><rect x="1" y="1" width="2" height="2" fill="#3a8fd4"/><rect x="13" y="1" width="2" height="2" fill="#3a8fd4"/><rect x="1" y="13" width="2" height="2" fill="#3a8fd4"/><path d="M9.5 15l5-5 1.5 1.5-5 5z" fill="#f0c070"/><path d="M14.5 10l1-1 1.5 1.5-1 1z" fill="#e05050"/></g>
<rect x="1061.2" y="1068" width="9" height="9" fill="#757575"/><path d="M1062.7 1072.5h6M1065.7 1069.5v6" stroke="#fff" stroke-width="1.3"/>
<rect x="1109.2" y="1068" width="9" height="9" fill="#757575"/><path d="M1110.7 1072.5h6M1113.7 1069.5v6" stroke="#fff" stroke-width="1.3"/>
<rect x="1133.2" y="1068" width="9" height="9" fill="#757575"/><path d="M1134.7 1072.5h6M1137.7 1069.5v6" stroke="#fff" stroke-width="1.3"/>
<rect x="1181.2" y="1068" width="9" height="9" fill="#757575"/><path d="M1182.7 1072.5h6M1185.7 1069.5v6" stroke="#fff" stroke-width="1.3"/>
<path d="M1840.5 1042h12v3l-5 5h-2l-5-5z" fill="#555"/><rect x="1845.5" y="1045" width="2" height="29" fill="#555"/>
<g transform="translate(1898.3 1060)"><circle r="5.8" fill="#777"/><rect x="-1.8" y="-8.3" width="3.6" height="4.5" fill="#777" transform="rotate(0)"/><rect x="-1.8" y="-8.3" width="3.6" height="4.5" fill="#777" transform="rotate(45)"/><rect x="-1.8" y="-8.3" width="3.6" height="4.5" fill="#777" transform="rotate(90)"/><rect x="-1.8" y="-8.3" width="3.6" height="4.5" fill="#777" transform="rotate(135)"/><rect x="-1.8" y="-8.3" width="3.6" height="4.5" fill="#777" transform="rotate(180)"/><rect x="-1.8" y="-8.3" width="3.6" height="4.5" fill="#777" transform="rotate(225)"/><rect x="-1.8" y="-8.3" width="3.6" height="4.5" fill="#777" transform="rotate(270)"/><rect x="-1.8" y="-8.3" width="3.6" height="4.5" fill="#777" transform="rotate(315)"/><circle r="2.6" fill="#f0f0f0"/></g>
</g>
<g id="top">
<rect x="0" y="0" width="1920" height="32" fill="#cbcbcb"/>
<rect x="0" y="0" width="1920" height="1.5" fill="#b4b4b4"/>
<rect x="0" y="31" width="1920" height="83" fill="#f0f0f0"/>
<rect x="0" y="113" width="1920" height="1.2" fill="#dadada"/>
<rect x="193" y="4" width="39" height="28" fill="#bababa"/>
<path d="M236 32V9q0-5 5-5H1698q5 0 5 5V32z" fill="#f0f0f0"/>
<rect x="1707" y="4" width="28" height="28" fill="#bbbbbb"/>
<rect x="8.7" y="9" width="3.8" height="3.8" fill="#555555"/><rect x="8.7" y="14.2" width="3.8" height="3.8" fill="#555555"/><rect x="8.7" y="19.4" width="3.8" height="3.8" fill="#555555"/><rect x="13.9" y="9" width="3.8" height="3.8" fill="#555555"/><rect x="13.9" y="14.2" width="3.8" height="3.8" fill="#555555"/><rect x="13.9" y="19.4" width="3.8" height="3.8" fill="#555555"/><rect x="19.1" y="9" width="3.8" height="3.8" fill="#555555"/><rect x="19.1" y="14.2" width="3.8" height="3.8" fill="#555555"/><rect x="19.1" y="19.4" width="3.8" height="3.8" fill="#555555"/>
<path d="M42 8.5h8.5l4.5 4.5v10.7h-13z" fill="#555555"/><path d="M50.5 8.5v4.5h4.5z" fill="#8a8a8a"/>
<path d="M62 13.7h5.5l-2.8 3.6z" fill="#555555"/>
<path d="M87.5 9h11l2.3 2.3v11.7h-13.3z" fill="#555555"/><rect x="90" y="10.2" width="7" height="4" fill="#cbcbcb"/><rect x="94.5" y="10.8" width="1.6" height="2.8" fill="#555555"/><rect x="90" y="17.5" width="8.2" height="5.5" fill="#cbcbcb"/><rect x="91.2" y="18.8" width="5.8" height="4.2" fill="#555555"/>
<path d="M121 14.5h6.5q5 0 5 6.5" fill="none" stroke="#555555" stroke-width="2"/><path d="M120 14.5l5-4.5v9z" fill="#555555"/>
<path d="M140.9 13.7h5.5l-2.8 3.6z" fill="#555555"/>
<path d="M172 14.5h-6.5q-5 0-5 6.5" fill="none" stroke="#9a9a9a" stroke-width="2"/><path d="M173 14.5l-5-4.5v9z" fill="#9a9a9a"/>
<path d="M180.1 13.7h5.5l-2.8 3.6z" fill="#9a9a9a"/>
<path d="M206 20.5l7.8-7 7.8 7h-2v6h-4.2v-4h-3.2v4h-4.2v-6z" fill="#777"/>
<path d="M901 12l7 3.2v8l-7 3.3-7-3.3v-8z" fill="#f08030"/><path d="M901 12l7 3.2-7 3.3-7-3.3z" fill="#f7a868"/><path d="M901 18.5l7-3.3v8l-7 3.3z" fill="#d9641a"/>
<text x="912.7" y="23.7" font-size="13" fill="#505050" font-weight="normal" textLength="121.3" lengthAdjust="spacingAndGlyphs" >N100 Gaming PC v8*</text>
<path d="M1687.5 13.5l8.5 8.5m0-8.5l-8.5 8.5" stroke="#666" stroke-width="1.4" fill="none"/>
<path d="M1715 17.5h13M1721.5 11v13" stroke="#6a6a6a" stroke-width="2.4" fill="none"/>
<circle cx="1755" cy="16" r="6.6" fill="none" stroke="#555" stroke-width="2.2"/><path d="M1755 16l5-5" stroke="#555" stroke-width="2.4"/><path d="M1750 21l-2.5 3 5 .5z" fill="#555"/><path d="M1757.5 9.5h4.5v4.5" fill="none" stroke="#cbcbcb" stroke-width="1.2"/>
<circle cx="1788" cy="16" r="8" fill="none" stroke="#555" stroke-width="1"/><circle cx="1788" cy="16" r="6.2" fill="#555"/><path d="M1788 11.5v5h4" stroke="#cbcbcb" stroke-width="1.2" fill="none"/>
<path d="M1821 8q1.6 0 1.6 1.4q3.6 1.2 3.6 5.6v3.4l1.8 2.2v1h-14v-1l1.8-2.2v-3.4q0-4.4 3.6-5.6q0-1.4 1.6-1.4z" fill="#555"/><circle cx="1821" cy="23.2" r="1.5" fill="#555"/>
<circle cx="1854" cy="16" r="8" fill="#555"/><text x="1854" y="20.5" font-size="13" font-weight="bold" fill="#cbcbcb" text-anchor="middle">?</text>
<defs><radialGradient id="av" cx="50%" cy="40%" r="60%"><stop offset="0" stop-color="#c5d2e2"/><stop offset="1" stop-color="#9fb1c8"/></radialGradient><clipPath id="avc"><circle cx="1895" cy="16" r="11.6"/></clipPath></defs><circle cx="1895" cy="16" r="11.6" fill="url(#av)"/><g clip-path="url(#avc)"><ellipse cx="1895.5" cy="12" rx="5" ry="6.2" fill="#4c6587"/><path d="M1884 29q1-7 8-8.5h7q7 1.5 8 8.5z" fill="#4c6587"/></g><circle cx="1912" cy="8" r="3" fill="#5b4fff"/>
<rect x="12.5" y="43.5" width="108" height="59" rx="5" fill="#f0f0f0" stroke="#dcdcdc"/>
<text x="40.7" y="76.1" font-size="11.5" fill="#3c3c3c" font-weight="bold" textLength="41.6" lengthAdjust="spacingAndGlyphs" >DESIGN</text>
<path d="M88 70.7h5.5l-2.8 3.6z" fill="#3c3c3c"/>
<text x="150" y="47" font-size="11" fill="#1f8fd6" font-weight="normal" textLength="34" lengthAdjust="spacingAndGlyphs" >SOLID</text>
<rect x="139" y="52" width="58.5" height="3" rx="1.5" fill="#1f8fd6"/>
<text x="232.7" y="47" font-size="11" fill="#4a4a4a" font-weight="normal" textLength="47.6" lengthAdjust="spacingAndGlyphs" >SURFACE</text>
<text x="326" y="47" font-size="11" fill="#4a4a4a" font-weight="normal" textLength="29" lengthAdjust="spacingAndGlyphs" >MESH</text>
<text x="399" y="47" font-size="11" fill="#4a4a4a" font-weight="normal" textLength="71.7" lengthAdjust="spacingAndGlyphs" >SHEET METAL</text>
<text x="517" y="47" font-size="11" fill="#4a4a4a" font-weight="normal" textLength="42.5" lengthAdjust="spacingAndGlyphs" >PLASTIC</text>
<text x="605" y="47" font-size="11" fill="#4a4a4a" font-weight="normal" textLength="48.5" lengthAdjust="spacingAndGlyphs" >UTILITIES</text>
<text x="698.3" y="47" font-size="11" fill="#4a4a4a" font-weight="normal" textLength="46" lengthAdjust="spacingAndGlyphs" >MANAGE</text>
<text x="233.3" y="108" font-size="11" fill="#4a4a4a" font-weight="normal" textLength="40" lengthAdjust="spacingAndGlyphs" >CREATE</text>
<path d="M277.5 101.8h5l-2.5 3.4z" fill="#3a3a3a"/>
<text x="409.3" y="108" font-size="11" fill="#4a4a4a" font-weight="normal" textLength="60.7" lengthAdjust="spacingAndGlyphs" >AUTOMATE</text>
<path d="M473.2 101.8h5l-2.5 3.4z" fill="#3a3a3a"/>
<text x="601" y="108" font-size="11" fill="#4a4a4a" font-weight="normal" textLength="41.3" lengthAdjust="spacingAndGlyphs" >MODIFY</text>
<path d="M646.2 101.8h5l-2.5 3.4z" fill="#3a3a3a"/>
<text x="800.7" y="108" font-size="11" fill="#4a4a4a" font-weight="normal" textLength="52.6" lengthAdjust="spacingAndGlyphs" >ASSEMBLE</text>
<path d="M856.8 101.8h5l-2.5 3.4z" fill="#3a3a3a"/>
<text x="916.7" y="108" font-size="11" fill="#4a4a4a" font-weight="normal" textLength="61" lengthAdjust="spacingAndGlyphs" >CONFIGURE</text>
<path d="M981.2 101.8h5l-2.5 3.4z" fill="#3a3a3a"/>
<text x="1020" y="108" font-size="11" fill="#4a4a4a" font-weight="normal" textLength="65" lengthAdjust="spacingAndGlyphs" >CONSTRUCT</text>
<path d="M1089.2 101.8h5l-2.5 3.4z" fill="#3a3a3a"/>
<text x="1123.3" y="108" font-size="11" fill="#4a4a4a" font-weight="normal" textLength="45" lengthAdjust="spacingAndGlyphs" >INSPECT</text>
<path d="M1170.2 101.8h5l-2.5 3.4z" fill="#3a3a3a"/>
<text x="1233.3" y="108" font-size="11" fill="#4a4a4a" font-weight="normal" textLength="37.4" lengthAdjust="spacingAndGlyphs" >INSERT</text>
<path d="M1274.2 101.8h5l-2.5 3.4z" fill="#3a3a3a"/>
<text x="1342.7" y="108" font-size="11" fill="#4a4a4a" font-weight="normal" textLength="37.3" lengthAdjust="spacingAndGlyphs" >SELECT</text>
<path d="M1384.2 101.8h5l-2.5 3.4z" fill="#3a3a3a"/>
<rect x="394" y="58" width="1" height="50" fill="#dedede"/><rect x="492.5" y="58" width="1" height="50" fill="#dedede"/><rect x="761.7" y="58" width="1" height="50" fill="#dedede"/><rect x="901.7" y="58" width="1" height="50" fill="#dedede"/><rect x="1004.3" y="58" width="1" height="50" fill="#dedede"/><rect x="1109.3" y="58" width="1" height="50" fill="#dedede"/><rect x="1188.3" y="58" width="1" height="50" fill="#dedede"/><rect x="1328.3" y="58" width="1" height="50" fill="#dedede"/>
<g transform="translate(137 59)"><path d="M1.5 1.5h27v20M1.5 1.5v27h18" fill="none" stroke="#707070" stroke-width="1"/><rect x="0" y="0" width="3" height="3" fill="#555"/><rect x="27" y="0" width="3" height="3" fill="#555"/><rect x="0" y="27" width="3" height="3" fill="#555"/><path d="M8.5 8.5h13q0 13-13 13z" fill="none" stroke="#707070" stroke-width="1" stroke-dasharray="4 2"/><rect x="7" y="7" width="3" height="3" fill="#555"/><rect x="20" y="7" width="3" height="3" fill="#555"/><rect x="7" y="20" width="3" height="3" fill="#555"/><path d="M24 18v13M17.5 24.5h13" stroke="#2ea84a" stroke-width="4.2"/></g>
<g transform="translate(181 59)"><path d="M1 27h19l5-4v4l-5 4.5h-19z" fill="#bdbdbd"/><path d="M1 27h19v4.5h-19z" fill="#d0d0d0"/><path d="M1 7l5-5.5h19l-5 5.5z" fill="#8cc8f4"/><path d="M1 7h19v19.5h-19z" fill="#5fb0ea"/><path d="M20 7l5-5.5v21l-5 4z" fill="#3a8fd4"/><path d="M28.5 4v22" stroke="#333" stroke-width="1.1"/><path d="M28.5 1.5l2.4 4.5h-4.8z" fill="#333"/></g>
<g transform="translate(223 61)"><path d="M3 5q13-7 27 0" fill="none" stroke="#444" stroke-width="1.1"/><path d="M1.5 6.5l4.5-3.5.5 4.5z" fill="#333"/><path d="M1 13q15-10 31 0l-6 6q-9-5-19 0z" fill="#8cc8f4"/><path d="M1 13l6 6v8l-6-6z" fill="#3a8fd4"/><path d="M7 19q9.5-5 19 0v8q-9.5-5-19 0z" fill="#5fb0ea"/><path d="M26 19l6-6v8l-6 6z" fill="#f4f4f4" stroke="#666" stroke-width="1"/></g>
<g transform="translate(266 59)"><path d="M1 6l4-4.5h26l-4 4.5z" fill="#e9e9e9" stroke="#777" stroke-width=".9"/><path d="M27 6l4-4.5v26l-4 4.5z" fill="#bcbcbc" stroke="#777" stroke-width=".9"/><rect x="1" y="6" width="26" height="26" fill="#d9d9d9" stroke="#777" stroke-width=".9"/><circle cx="14" cy="19" r="8.5" fill="#f2f2f2" stroke="#4a7fb0" stroke-width="1"/><circle cx="14" cy="19" r="6.8" fill="#5fb0ea"/><path d="M14.5 12.5a7 7 0 0 1 6.5 6.5q-5-1-6.5-6.5z" fill="#eef6fc"/></g>
<g transform="translate(309 61)"><path d="M4.5 8v19M8 4.5h15M8 25.5h15" stroke="#666" stroke-width="1"/><rect x="1.5" y="1.5" width="6" height="6" fill="#fff" stroke="#666"/><rect x="22" y="1" width="7" height="7" fill="#5fb0ea"/><rect x="1" y="22" width="7" height="7" fill="#5fb0ea"/><rect x="22" y="22" width="7" height="7" fill="#5fb0ea"/></g>
<g transform="translate(352 60)"><path d="M2 11q0-7 6-8h14q6 1 7 7v12q-1 7-7 8h-14q-6-1-6-7z" fill="#a77be0" stroke="#c6a6ee" stroke-width="1.2"/><path d="M24 12l6-2v14l-6 5z" fill="#7e56c2"/><path d="M3 16h20M13 5v24" stroke="#8e63cf" stroke-width="1"/><path d="M25 0l1.8 4 3.7-2-.9 4.2 4.2.6-3.3 2.7 2.6 3.3-4.2-.2-.5 4.2-3.4-2.6-3.4 2.6-.5-4.2-4.2.2 2.6-3.3-3.3-2.7 4.2-.6-.9-4.2 3.7 2z" fill="#f5a623"/></g>
<g transform="translate(425.5 58)"><path d="M7 7l8.5 13M26 9l-8.5 11M16.5 19v8" stroke="#4b8fc8" stroke-width="4" fill="none"/><path d="M9.5 12.5q7 4 14 0l-7 11z" fill="#4b8fc8"/><path d="M14.5 16.5h4l-2 4z" fill="#f0f0f0"/><rect x="3" y="2" width="6" height="6" fill="#f0f0f0" stroke="#555" transform="rotate(-8 6 5)"/><path d="M26 4l4.5 3-1.5 5-5 .5-2.5-4z" fill="#f0f0f0" stroke="#555"/><circle cx="16.5" cy="27.5" r="4.3" fill="#f0f0f0" stroke="#4b8fc8" stroke-width="2"/><circle cx="16.5" cy="27.5" r="1.3" fill="none" stroke="#555" stroke-width=".8"/></g>
<g transform="translate(506 59)"><path d="M1 7l5-5.5h7l-5 5.5z" fill="#efefef" stroke="#777" stroke-width=".8"/><path d="M1 7h7v24h-7z" fill="#dcdcdc" stroke="#777" stroke-width=".8"/><path d="M8 7l5-5.5h9l-5 5.5z" fill="#8cc8f4"/><path d="M8 7h9v24h-9z" fill="#5fb0ea"/><path d="M17 7l5-5.5v24l-5 5.5z" fill="#3a8fd4"/><path d="M19 16.5h8" stroke="#222" stroke-width="1.3"/><path d="M30 16.5l-4.5-2.5v5z" fill="#222"/><rect x="18.5" y="14.5" width="3" height="4" fill="#d6ecfb"/></g>
<g transform="translate(547.5 59)"><path d="M1 9l6-7.5h10q13 2 15 14v8l-6 7.5h-25z" fill="#dadada" stroke="#777" stroke-width=".8"/><path d="M1 9h12q12 1 13 13v9h-25z" fill="#d4d4d4" stroke="#888" stroke-width=".6"/><path d="M26 22l6-6.5v8l-6 7.5z" fill="#bdbdbd"/><path d="M13 9l5-7.5q12 2 14 14l-6 6.5q-1-12-13-13z" fill="#5fb0ea"/></g>
<g transform="translate(591 59)"><path d="M1 7l5-5.5h26l-5 5.5z" fill="#efefef" stroke="#777" stroke-width=".8"/><path d="M27 7l5-5.5v25l-5 5.5z" fill="#bdbdbd" stroke="#777" stroke-width=".8"/><rect x="1" y="7" width="26" height="25" fill="#e6e6e6" stroke="#777" stroke-width=".8"/><rect x="4.5" y="11" width="18.5" height="17.5" fill="#f6f6f6"/><path d="M5 12h7v9h10v7h-17z" fill="#8cc8f4"/><path d="M5 12h7v9l-7 7z" fill="#3a8fd4"/></g>
<g transform="translate(634 59)"><path d="M11 5l4-4h17l-4 4z" fill="#8cc8f4"/><rect x="11" y="5" width="17" height="14" fill="#5fb0ea"/><path d="M28 5l4-4v17l-4 4z" fill="#3a8fd4"/><path d="M1 15l4-4h17l-4 4z" fill="#8cc8f4"/><rect x="1" y="15" width="17" height="17" fill="#5fb0ea"/><path d="M18 15l4-4v4h6v4h4l-4 4h-6v5l-4 4z" fill="#3a8fd4"/></g>
<g transform="translate(677.5 59)"><path d="M4 21h22l5-5v11l-5 5h-22z" fill="#c9c9c9"/><path d="M4 21h22v11h-22z" fill="#dedede" stroke="#999" stroke-width=".6"/><path d="M1 19h26l6-7" fill="none" stroke="#666" stroke-width="1"/><path d="M1 17.5h26l6-7" fill="none" stroke="#bfe0f7" stroke-width="1.6"/><path d="M4 5l5-4h22l-5 4z" fill="#8cc8f4"/><rect x="4" y="5" width="22" height="11" fill="#5fb0ea"/><path d="M26 5l5-4v9l-5 6z" fill="#3a8fd4"/></g>
<g transform="translate(720.5 59)"><path d="M16 4v24M4 16h24" stroke="#222" stroke-width="2"/><path d="M16 0l4.5 6h-9zM16 32l4.5-6h-9zM0 16l6-4.5v9zM32 16l-6-4.5v9z" fill="#222"/></g>
<g transform="translate(773 59)"><path d="M1 17q0-5 5-5h4q5 0 5 5v15h-3.5v-6h-7v6h-3.5z" fill="#c4c4c4" stroke="#888" stroke-width=".8"/><path d="M4.5 16h7v6h-7z" fill="#e8e8e8"/><path d="M18 12l4-3v8l3 2v-9l4-3v20l-4-3v-3l-3-2v8l-4-3z" fill="#d0d0d0" stroke="#888" stroke-width=".8"/><path d="M28 2l4-1.5v22l-4-2z" fill="#c2c2c2" stroke="#888" stroke-width=".7"/><path d="M16 13v5M14 16l2 2.5 2-2.5M25 6v5M23 9l2 2.5 2-2.5" stroke="#3a8fd4" stroke-width="1" fill="none"/></g>
<g transform="translate(816.5 60)"><path d="M1 9l3-3.5h11l-3 3.5z" fill="#8cc8f4"/><rect x="1" y="9" width="11.5" height="10" fill="#5fb0ea"/><path d="M12.5 9l3-3.5v10l-3 3.5z" fill="#3a8fd4"/><rect x="1" y="19" width="11.5" height="12" fill="#d8d8d8" stroke="#aaa" stroke-width=".6"/><rect x="12.5" y="19" width="11.5" height="12" fill="#e0e0e0" stroke="#aaa" stroke-width=".6"/><path d="M12.5 19l3-3.5h11.5l-3 3.5z" fill="#efefef" stroke="#aaa" stroke-width=".5"/><path d="M24 19l3-3.5v12l-3 3.5z" fill="#c4c4c4"/><path d="M22 0l1.6 3.6 3.3-1.8-.8 3.8 3.8.5-3 2.4 2.3 3-3.8-.2-.4 3.8-3-2.3-3 2.3-.4-3.8-3.8.2 2.3-3-3-2.4 3.8-.5-.8-3.8 3.3 1.8z" fill="#f5a623"/></g>
<g transform="translate(861.5 60)"><path d="M1 11q0-4 3-6l5-3q3-1 3 2v12h-4v2l-4 11h-3z" fill="#c6c6c6" stroke="#888" stroke-width=".8"/><path d="M8 4l4-2v12l-4 2z" fill="#e2e2e2" stroke="#999" stroke-width=".5"/><path d="M16 13l6-5q2-1.5 4 0l3 4v17l-4-2v-4l-5-3v6l-4-2z" fill="#c9c9c9" stroke="#888" stroke-width=".8"/><path d="M17 14l5-2v8l-5 1z" fill="#dfe9f2"/><path d="M10 14v5M19 6v6M17 10l2 2.5 2-2.5" stroke="#3a8fd4" stroke-width="1" fill="none"/></g>
<g transform="translate(916.5 59)"><path d="M1 5l4-4h23l-4 4z" fill="#f2f2f2" stroke="#999" stroke-width=".7"/><path d="M24 5l4-4v23l-4 3z" fill="#c9c9c9" stroke="#999" stroke-width=".7"/><rect x="1" y="5" width="23" height="22" fill="#e2e2e2" stroke="#999" stroke-width=".7"/><path d="M19 23h13M19 30h13" stroke="#555" stroke-width="1.5"/><path d="M19 23h7" stroke="#3a8fd4" stroke-width="1.5"/><path d="M23 20.5v5M28 27.5v5" stroke="#3a8fd4" stroke-width="1.8"/><path d="M28 27.5v5" stroke="#555" stroke-width="1.8"/></g>
<g transform="translate(960 59)"><rect x="1" y="1" width="28" height="26" fill="#f6f6f6" stroke="#777" stroke-width="1"/><rect x="1" y="1" width="28" height="5" fill="#555"/><rect x="3" y="2.5" width="4" height="2" fill="#eee"/><path d="M4 10h22M4 15h22M4 20h22M4 24.5h22M4 10v14.5M11 10v14.5M18.5 10v14.5M26 10v14.5" stroke="#777" stroke-width=".9" fill="none"/><rect x="17" y="20" width="16" height="13" fill="#f0f0f0"/><path d="M19 23h13M19 30h13" stroke="#555" stroke-width="1.5"/><path d="M19 23h7" stroke="#3a8fd4" stroke-width="1.5"/><path d="M23 20.5v5" stroke="#3a8fd4" stroke-width="1.8"/><path d="M28 27.5v5" stroke="#555" stroke-width="1.8"/></g>
<g transform="translate(1020.5 59)"><path d="M1 21l6-6h7l-2 6v9h-11z" fill="#dcdcdc" stroke="#999" stroke-width=".7"/><path d="M12 21l4-5v9l-4 5z" fill="#c2c2c2" stroke="#999" stroke-width=".6"/><path d="M5 13l11-12 14 14-11 12z" fill="#e8935a" fill-opacity=".92"/><path d="M7 11l14 2-5 12z" fill="#f5e9df" fill-opacity=".55" stroke="#fff" stroke-width=".6"/><path d="M14 23l4 1-4 6z" fill="#4fbf72"/></g>
<g transform="translate(1063 59)"><path d="M1 9q0-4 3-5l6-3v27l-5 3h-4z" fill="#dcdcdc" stroke="#888" stroke-width=".8"/><path d="M6 6l5-4v26l-5 3z" fill="#c6c6c6" stroke="#888" stroke-width=".6"/><path d="M11 5l7-4.5v25l-7 7z" fill="#4fbf72"/><path d="M22 9l9-7v22l-9 8z" fill="#e8935a"/></g>
<g transform="translate(1134 66)"><path d="M1.5 0v8M29.5 0v8M2 4h27" stroke="#555" stroke-width="1" fill="none"/><path d="M1.5 4l4-2v4zM29.5 4l-4-2v4z" fill="#555"/><rect x="1" y="10" width="29" height="7" fill="#f5a623"/><rect x="1" y="10" width="29" height="1.5" fill="#d98a10"/><path d="M5 11.5v2M9 11.5v2M13 11.5v2M17 11.5v2M21 11.5v2M25 11.5v2" stroke="#b06c08" stroke-width=".8"/></g>
<g transform="translate(1200 59)"><path d="M5 9l4-4h17l-4 4z" fill="#f4f4f4" stroke="#999" stroke-width=".6"/><path d="M22 9l4-4v21l-4 4z" fill="#c2c2c2" stroke="#999" stroke-width=".6"/><rect x="5" y="9" width="17" height="21" fill="#e2e2e2" stroke="#999" stroke-width=".6"/><path d="M0 4.5h8v-3.5l8 6-8 6v-3.5h-8z" fill="#2a86d0"/><g transform="rotate(-32 22 27)" fill="none" stroke="#333" stroke-width="1.7"><rect x="14.5" y="24" width="9" height="6" rx="3"/><rect x="20.5" y="24" width="9" height="6" rx="3"/></g></g>
<g transform="translate(1245 59)"><rect x="1" y="2" width="23" height="7" rx="1.5" fill="#6fa8dc"/><rect x="1" y="2" width="23" height="2.5" rx="1" fill="#8fc0ea"/><rect x="7" y="9" width="12" height="22" rx="1.5" fill="#6fa8dc"/><path d="M7 12h12M7 14.5h12M7 17h12M7 19.5h12M7 22h12M7 24.5h12M7 27h12" stroke="#9ccaf0" stroke-width=".9"/><rect x="16" y="17" width="16" height="16" fill="#f0f0f0" fill-opacity=".8"/><path d="M24 18.5v13M17.5 25h13" stroke="#2ea84a" stroke-width="4"/></g>
<g transform="translate(1287 60)"><rect x=".5" y=".5" width="28" height="28" fill="#74b9ef" stroke="#4a90d0" stroke-width="1"/><circle cx="21.5" cy="8" r="3" fill="#f4f7d8"/><path d="M1 28.5v-9q3-7 6.5-7t7.5 9q2-3 4.5-3t4 4.5l4.5 5v.5z" fill="#3583c6"/></g>
<g transform="translate(1347 56)"><rect x="0" y="0" width="38" height="38" fill="#1e8ad2"/><rect x="3.5" y="3.5" width="27" height="21.5" fill="none" stroke="#7fe08a" stroke-width="1.1" stroke-dasharray="4 2.5"/><path d="M24 17v15l3.5-3 2.5 6 2.5-1-2.5-6h5z" fill="#fff" stroke="#1e8ad2" stroke-width=".6"/></g>
</g>
<path d="M1822.5 815v13.5l3-2.8 2.3 5 1.8-.8-2.3-5h4.2z" fill="#111" stroke="#fff" stroke-width=".8"/>
<path d="M1899.5 1009a7.5 7.5 0 1 0 0 15h7.5v-7.5a7.5 7.5 0 0 0-7.5-7.5z" fill="#111"/><path d="M1895.5 1018l7-3.5M1895.5 1016l1 2.5M1898 1015l1 2.5M1900.5 1014l1 2.5" stroke="#ddd" stroke-width=".8"/>
<rect x="0" y="1078.5" width="1920" height="1.5" fill="#c2c2c2"/><rect x="1919" y="32" width="1" height="1048" fill="#c0c0c0"/>
</svg>
</body></html>
